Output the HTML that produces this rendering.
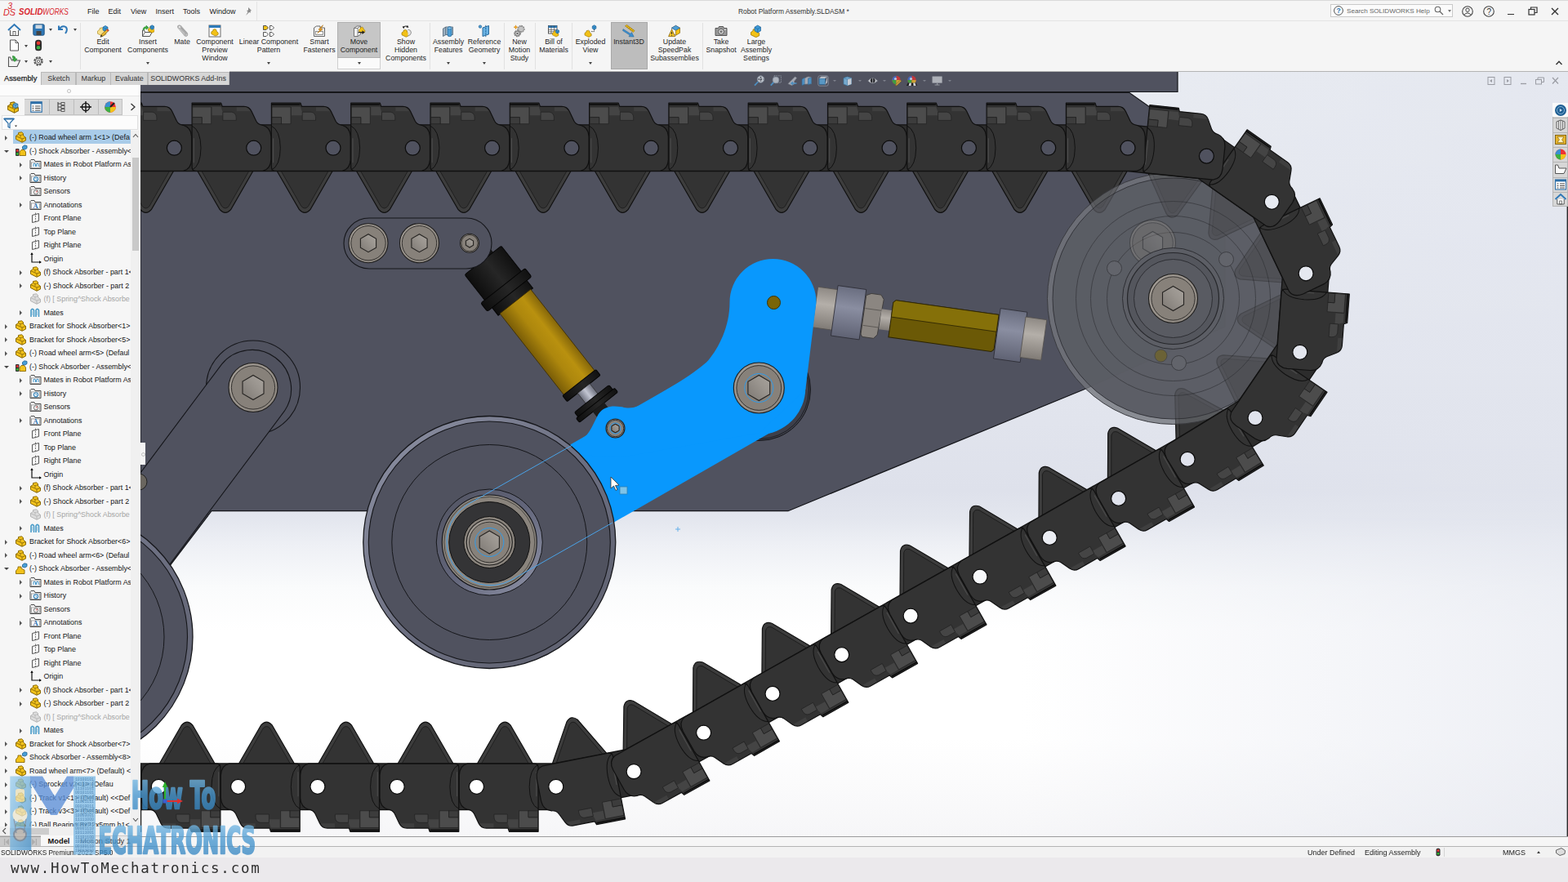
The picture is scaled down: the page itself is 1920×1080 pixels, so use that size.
<!DOCTYPE html><html><head><meta charset="utf-8"><title>Robot Platform Assembly.SLDASM</title><style>
html,body{margin:0;padding:0;width:1920px;height:1080px;overflow:hidden;background:#f4f4f4;}
body{font-family:"Liberation Sans",sans-serif;font-size:9px;color:#222;position:relative;}
#scene{position:absolute;left:0;top:0;}
.abs{position:absolute;}
#title{left:0;top:0;width:1920px;height:25px;background:#f5f5f5;border-top:1px solid #d9d9d9;box-sizing:border-box;}
#ribbon{left:0;top:25px;width:1920px;height:63px;background:#f5f5f5;border-top:1px solid #e3e3e3;box-sizing:border-box;}
.menu{top:7.5px;font-size:9px;color:#1a1a1a;}
.rb{top:45.5px;text-align:center;font-size:8.8px;line-height:10px;color:#1f1f1f;transform:translateX(-50%);white-space:nowrap;}
.ic{width:16px;height:16px;top:30px;transform:translateX(-50%);}
.sep{top:28px;width:1px;height:57px;background:#e1e1e1;}
.dd{width:0;height:0;border-left:2.5px solid transparent;border-right:2.5px solid transparent;border-top:3px solid #444;transform:translateX(-50%);}
.tab{top:87.5px;height:16.5px;box-sizing:border-box;font-size:8.9px;line-height:15.5px;text-align:center;background:#d6d6d6;border:1px solid #b9b9b9;border-bottom:none;color:#333;}
#left{left:0;top:104px;width:172px;height:934px;background:#f6f6f6;overflow:hidden;}
.tr{left:0;height:16.5px;line-height:16.5px;font-size:8.9px;white-space:nowrap;color:#151515;}
.tr.g{color:#a5a5a5;}
.ar{width:0;height:0;border-top:3px solid transparent;border-bottom:3px solid transparent;border-left:3.5px solid #555;}
.ad{width:0;height:0;border-left:3px solid transparent;border-right:3px solid transparent;border-top:3.5px solid #444;}
#status{left:0;top:1036px;width:1920px;height:14px;background:#f2f2f2;border-top:1px solid #b5b5b5;font-size:9px;line-height:14px;}
#bottom{left:0;top:1050px;width:1920px;height:30px;background:#ebe9ec;}
#url{left:13px;top:1053px;font-family:"DejaVu Sans Mono","Liberation Mono",monospace;font-size:17.5px;letter-spacing:1.72px;color:#2e2e2e;white-space:nowrap;}
</style></head><body><svg id="scene" width="1920" height="1080" viewBox="0 0 1920 1080"><defs>
<linearGradient id="gBg" x1="0" y1="0" x2="0" y2="1">
 <stop offset="0" stop-color="#e9ecf2"/><stop offset="0.27" stop-color="#e5e8f0"/><stop offset="0.45" stop-color="#e1e4ed"/><stop offset="0.54" stop-color="#dee1eb"/><stop offset="0.575" stop-color="#e3e6ee"/><stop offset="0.61" stop-color="#eef0f5"/><stop offset="0.665" stop-color="#fafbfc"/><stop offset="0.72" stop-color="#ffffff"/><stop offset="0.86" stop-color="#ffffff"/><stop offset="1" stop-color="#f5f5f7"/>
</linearGradient>
<linearGradient id="gBgH" x1="0" y1="0" x2="1" y2="0">
 <stop offset="0" stop-color="#e2e5ee" stop-opacity="0"/><stop offset="1" stop-color="#e2e5ee" stop-opacity="0.6"/>
</linearGradient>
<linearGradient id="gBoltO" x1="0" y1="0" x2="1" y2="1">
 <stop offset="0" stop-color="#a39d96"/><stop offset="1" stop-color="#8b857e"/>
</linearGradient>
<linearGradient id="gHex" x1="0" y1="1" x2="1" y2="0">
 <stop offset="0" stop-color="#7d7873"/><stop offset="0.6" stop-color="#9a958f"/><stop offset="1" stop-color="#a9a49e"/>
</linearGradient>
<linearGradient id="gRim" x1="0" y1="0" x2="1" y2="1">
 <stop offset="0" stop-color="#8f93a6"/><stop offset="0.5" stop-color="#6d7082"/><stop offset="1" stop-color="#5b5d6b"/>
</linearGradient>
<linearGradient id="gRim2" x1="0" y1="0" x2="1" y2="1">
 <stop offset="0" stop-color="#50525f"/><stop offset="0.5" stop-color="#62657a"/><stop offset="1" stop-color="#9296aa"/>
</linearGradient>
<linearGradient id="gBlk" x1="0" y1="0" x2="0" y2="1">
 <stop offset="0" stop-color="#111"/><stop offset="0.45" stop-color="#262626"/><stop offset="1" stop-color="#0e0e0e"/>
</linearGradient>
<linearGradient id="gGold" x1="0" y1="0" x2="0" y2="1">
 <stop offset="0" stop-color="#86670a"/><stop offset="0.3" stop-color="#b9910f"/><stop offset="0.6" stop-color="#ad870d"/><stop offset="1" stop-color="#7a5d07"/>
</linearGradient>
<linearGradient id="gRod" x1="0" y1="0" x2="0" y2="1">
 <stop offset="0" stop-color="#6f7280"/><stop offset="0.5" stop-color="#c2c5d2"/><stop offset="1" stop-color="#6f7280"/>
</linearGradient>
<linearGradient id="gSilv" x1="0" y1="0" x2="0" y2="1">
 <stop offset="0" stop-color="#8e8984"/><stop offset="0.4" stop-color="#b4afa9"/><stop offset="1" stop-color="#807b76"/>
</linearGradient>
<linearGradient id="gGB" x1="0" y1="0" x2="0" y2="1">
 <stop offset="0" stop-color="#6a6e80"/><stop offset="0.4" stop-color="#8a8ea1"/><stop offset="1" stop-color="#5f6273"/>
</linearGradient>
<g id="lkt"><path d="M-69.5 27 L-41.5 75.5 Q-34.8 83 -28.1 75.5 L-0.2 27 Z" fill="#3d3d3d" stroke="#111" stroke-width="1.2" stroke-linejoin="round"/><path d="M-64.5 27 L-39 71.5 Q-34.8 76 -30.6 71.5 L-5.2 27 Z" fill="#333" stroke="#1a1a1a" stroke-width="0.8" stroke-linejoin="round"/></g><g id="lkb"><path d="M-75.6 -55 L-40 -55 L-38.5 -50.8 L-12 -50.8 Q-5.5 -50.8 -2.7 -44.9 L3 -33 Q5.5 -28.5 11 -27.9 Q20.7 -25 21.2 -14 L21.2 14 Q20.7 26 11 28.1 L-70.6 28.1 Q-75.6 28.1 -75.6 23 Z" fill="#333333" stroke="#111" stroke-width="1.2" stroke-linejoin="round"/><path d="M-75 -50.2 L-52 -50.2 L-52 -29.5 L-63.5 -29.5 L-63.5 -37.5 L-75 -37.5 Z" fill="#4c4c4c" stroke="#1c1c1c" stroke-width="0.6"/><path d="M-75 -37.5 L-63.5 -37.5 L-63.5 -29.5 L-75 -29.5 Z" fill="#3c3c3c" stroke="#1c1c1c" stroke-width="0.6"/><path d="M-51 -50.2 L-40 -50.2 L-38 -44 L-38 -40 L-51 -40 Z" fill="#444" /><path d="M-37.8 -44 L-27 -44 Q-21.5 -43 -21.5 -37 L-21.5 -33.8 L-37.8 -33.8 Z" fill="#454545" stroke="#1c1c1c" stroke-width="0.6"/><path d="M-21 -50 L-10 -50 Q-6 -49 -4 -45 L-21 -45 Z" fill="#3f3f3f"/><path d="M-75.6 -53.2 L-40.5 -53.2" stroke="#0a0a0a" stroke-width="1.4" fill="none"/><path d="M-75.6 -27 Q-65 -22 -64.7 0 Q-65 22 -75.6 27" fill="none" stroke="#111" stroke-width="1"/><path d="M-73.4 -12 L-73.4 18" fill="none" stroke="#4a4a4a" stroke-width="1.2"/></g></defs><rect x="172" y="88" width="1748" height="950" fill="url(#gBg)"/><rect x="1250" y="88" width="670" height="950" fill="url(#gBgH)"/><rect x="1918.6" y="253" width="1.4" height="784" fill="#2a2a2a"/><rect x="172" y="88" width="1270" height="24.5" fill="#50525f"/><path d="M172 112.5 L1442 112.5 L1442 88" fill="none" stroke="#15161a" stroke-width="1.2"/><path d="M172 113.5 L1383 113.5 L1500 196 L1500 400 L1327 477 L965 625.7 L259 625.7 L172 740 Z" fill="#50525f" stroke="#15161a" stroke-width="1.2"/><circle cx="310" cy="474.5" r="57.5" fill="#50525f" stroke="#15161a" stroke-width="1.1"/><path d="M348.4 503.2 L119.9 808.7 A48 48 0 0 1 43.1 751.3 L271.6 445.8 A48 48 0 0 1 348.4 503.2 Z" fill="#50525f" stroke="#15161a" stroke-width="1.1"/><g transform="translate(310 474.5)"><circle r="30" fill="url(#gBoltO)" stroke="#1e1d1c" stroke-width="1.1"/><circle r="26.6" fill="#87817a" stroke="#2a2826" stroke-width="0.9"/><polygon points="13,7.5 0,15 -13,7.5 -13,-7.5 -0,-15 13,-7.5" fill="url(#gHex)" stroke="#262422" stroke-width="1.1"/></g><circle cx="170" cy="590" r="10" fill="#6a665f" stroke="#222" stroke-width="1"/><g transform="translate(575 298) rotate(51.8)"><rect x="4" y="-16" width="26" height="32" fill="#141414"/><rect x="26.5" y="-28.5" width="46" height="57" rx="2" fill="url(#gBlk)" stroke="#050505" stroke-width="1"/><rect x="66" y="-34.5" width="13" height="69" rx="2.5" fill="url(#gBlk)" stroke="#050505" stroke-width="1"/><rect x="79" y="-27" width="12" height="54" fill="url(#gBlk)" stroke="#050505" stroke-width="1"/><rect x="90.5" y="-24" width="127" height="48" fill="url(#gGold)" stroke="#3b2c02" stroke-width="0.8"/><rect x="217" y="-26" width="9" height="52" rx="1.5" fill="url(#gBlk)" stroke="#050505" stroke-width="1"/><rect x="226" y="-9.5" width="18" height="19" fill="url(#gRod)" stroke="#333" stroke-width="0.8"/><rect x="242" y="-27" width="7.5" height="54" rx="2" fill="url(#gBlk)" stroke="#050505" stroke-width="1"/><rect x="249" y="-30" width="6.5" height="60" rx="2" fill="url(#gBlk)" stroke="#050505" stroke-width="1"/><rect x="255" y="-9" width="18" height="18" fill="#1c1c1c"/></g><path d="M452 267 L571 267 A31 31 0 0 1 571 329 L452 329 A31 31 0 0 1 452 267 Z" fill="#50525f" stroke="#15161a" stroke-width="1.1"/><g transform="translate(451 297.7)"><circle r="24" fill="url(#gBoltO)" stroke="#1e1d1c" stroke-width="1.1"/><circle r="21.2" fill="#87817a" stroke="#2a2826" stroke-width="0.9"/><polygon points="9.6,5.5 0,11 -9.6,5.5 -9.6,-5.5 -0,-11 9.6,-5.5" fill="url(#gHex)" stroke="#262422" stroke-width="1.1"/></g><g transform="translate(513.5 297.7)"><circle r="24" fill="url(#gBoltO)" stroke="#1e1d1c" stroke-width="1.1"/><circle r="21.2" fill="#87817a" stroke="#2a2826" stroke-width="0.9"/><polygon points="9.6,5.5 0,11 -9.6,5.5 -9.6,-5.5 -0,-11 9.6,-5.5" fill="url(#gHex)" stroke="#262422" stroke-width="1.1"/></g><g transform="translate(575 297.7)"><circle r="11.5" fill="url(#gBoltO)" stroke="#1e1d1c" stroke-width="1.1"/><circle r="10.2" fill="#87817a" stroke="#2a2826" stroke-width="0.9"/><polygon points="4.6,2.6 0,5.3 -4.6,2.6 -4.6,-2.6 -0,-5.3 4.6,-2.6" fill="url(#gHex)" stroke="#262422" stroke-width="1.1"/></g><g transform="translate(81.5 780)"><circle r="154.5" fill="url(#gRim)" stroke="#15161a" stroke-width="1.3"/><circle r="148" fill="#50525f" stroke="#15161a" stroke-width="1.1"/><circle r="119.5" fill="none" stroke="#15161a" stroke-width="1"/></g><g transform="translate(998 377) rotate(8)"><rect x="0" y="-26" width="26" height="50" fill="url(#gSilv)" stroke="#55524e" stroke-width="0.8"/><rect x="24" y="-31" width="35" height="62" fill="url(#gGB)" stroke="#2a2b33" stroke-width="0.8"/><path d="M60 -24 L66 -27 L78 -27 L82 -22 L80 22 L76 27 L62 27 L60 24 Z" fill="#8b8681" stroke="#3a3835" stroke-width="0.8"/><path d="M61 -8 L81 -8 M61 13 L80 13" stroke="#55524e" stroke-width="0.8" fill="none"/><rect x="81" y="-10" width="14" height="25" fill="url(#gSilv)"/><path d="M94 -20 L97 -23 L224 -23 L224 20 L221 23 L94 23 Z" fill="#6b5906" stroke="#2c2402" stroke-width="1"/><path d="M97 -23 L224 -23 L224 -2 L94 -2 L94 -20 Z" fill="#857009" stroke="#2c2402" stroke-width="0.8"/><rect x="225" y="-31" width="33" height="62" fill="url(#gGB)" stroke="#2a2b33" stroke-width="0.8"/><rect x="257" y="-25" width="26" height="50" fill="url(#gSilv)" stroke="#55524e" stroke-width="0.8"/></g><circle cx="930" cy="477" r="62.5" fill="#3d3f4a" stroke="#15161a" stroke-width="1"/><circle cx="930" cy="477" r="60.5" fill="none" stroke="#15161a" stroke-width="0.8"/><path d="M572.2 616.7 L902.2 427.7 A54.5 54.5 0 0 1 956.4 522.3 L626.4 711.3 A54.5 54.5 0 0 1 572.2 616.7 Z" fill="#0998fd"/><circle cx="929.3" cy="475" r="57" fill="#0998fd"/><path d="M690 556 L698 545.5 C708 540 715 536 718.5 532.5 C724 526 728 516 732.5 507.5 C737 500 745 497.5 752.5 497.5 C760 497.5 765 499.5 770 499.5 C778 499.5 784 496 788.75 493.75 L830 468.75 C850 456 862 447 867.5 441 C880 426 893.5 400 893.5 370 A53 53 0 0 1 999.5 370 L986.3 477 L930 530 L760 560 Z" fill="#0998fd"/><circle cx="947.5" cy="370.5" r="8" fill="#7a6508" stroke="#3d3204" stroke-width="1"/><g transform="translate(929.3 475)"><circle r="31" fill="url(#gBoltO)" stroke="#1e1d1c" stroke-width="1.1"/><circle r="27.4" fill="#87817a" stroke="#2a2826" stroke-width="0.9"/><polygon points="13.4,7.7 0,15.5 -13.4,7.7 -13.4,-7.8 -0,-15.5 13.4,-7.8" fill="url(#gHex)" stroke="#262422" stroke-width="1.1"/><circle r="17.5" fill="none" stroke="#2f9bea" stroke-width="1"/></g><g transform="translate(753.5 524.5)"><circle r="11.5" fill="url(#gBoltO)" stroke="#1e1d1c" stroke-width="1.1"/><circle r="10.2" fill="#87817a" stroke="#2a2826" stroke-width="0.9"/><polygon points="4.6,2.6 0,5.3 -4.6,2.6 -4.6,-2.6 -0,-5.3 4.6,-2.6" fill="url(#gHex)" stroke="#262422" stroke-width="1.1"/><circle r="6.5" fill="none" stroke="#2f9bea" stroke-width="1"/></g><g transform="translate(599.3 664)"><circle r="154.5" fill="url(#gRim)" stroke="#15161a" stroke-width="1.3"/><circle r="148" fill="#50525f" stroke="#15161a" stroke-width="1.1"/><circle r="119.5" fill="none" stroke="#15161a" stroke-width="1"/><circle r="65" fill="url(#gRim2)" stroke="#15161a" stroke-width="1"/><circle r="58" fill="#8a847d" stroke="#15161a" stroke-width="1.1"/><circle r="55.5" fill="none" stroke="#3a3835" stroke-width="0.8"/><circle r="49.5" fill="#343436" stroke="#111" stroke-width="1"/><circle r="31.5" fill="#8a847d" stroke="#111" stroke-width="1"/></g><g transform="translate(599.3 664)"><circle r="28" fill="url(#gBoltO)" stroke="#1e1d1c" stroke-width="1.1"/><circle r="24.8" fill="#87817a" stroke="#2a2826" stroke-width="0.9"/><polygon points="12.1,7 0,14 -12.1,7 -12.1,-7 -0,-14 12.1,-7" fill="url(#gHex)" stroke="#262422" stroke-width="1.1"/><circle r="17.5" fill="none" stroke="#2f9bea" stroke-width="1"/></g><path d="M700 545.5 L572.7 617.6 A53.5 53.5 0 0 0 625.9 710.4 L750 640" fill="none" stroke="#4aa3e8" stroke-width="1"/><use href="#lkt" transform="translate(97 963.3) rotate(180)"/><use href="#lkt" transform="translate(194.3 963.3) rotate(180)"/><use href="#lkt" transform="translate(291.6 963.3) rotate(180)"/><use href="#lkt" transform="translate(388.9 963.3) rotate(180)"/><use href="#lkt" transform="translate(486.2 963.3) rotate(180)"/><use href="#lkt" transform="translate(583.5 963.3) rotate(180)"/><use href="#lkt" transform="translate(680.8 963.3) rotate(169)"/><use href="#lkt" transform="translate(776.1 944.7) rotate(150.9)"/><use href="#lkt" transform="translate(861.6 897.2) rotate(150.5)"/><use href="#lkt" transform="translate(946 849.4) rotate(150.6)"/><use href="#lkt" transform="translate(1030.7 801.6) rotate(150.6)"/><use href="#lkt" transform="translate(1115.1 754.1) rotate(150.6)"/><use href="#lkt" transform="translate(1200 706.2) rotate(150.7)"/><use href="#lkt" transform="translate(1285.2 658.4) rotate(150.4)"/><use href="#lkt" transform="translate(1369.6 610.4) rotate(150.4)"/><use href="#lkt" transform="translate(1454.1 562.4) rotate(148.6)"/><use href="#lkt" transform="translate(1537 511.7) rotate(124.3)"/><use href="#lkt" transform="translate(1591.8 431.3) rotate(94.3)"/><use href="#lkt" transform="translate(1599.1 334.8) rotate(64.5)"/><use href="#lkt" transform="translate(1557.3 247.3) rotate(35.1)"/><use href="#lkt" transform="translate(1477.4 191.1) rotate(5.9)"/><use href="#lkt" transform="translate(1381 181.2) rotate(0)"/><use href="#lkt" transform="translate(1283.7 181.2) rotate(0)"/><use href="#lkt" transform="translate(1186.4 181.2) rotate(0)"/><use href="#lkt" transform="translate(1089.1 181.2) rotate(0)"/><use href="#lkt" transform="translate(991.8 181.2) rotate(0)"/><use href="#lkt" transform="translate(894.5 181.2) rotate(0)"/><use href="#lkt" transform="translate(797.2 181.2) rotate(0)"/><use href="#lkt" transform="translate(699.9 181.2) rotate(0)"/><use href="#lkt" transform="translate(602.6 181.2) rotate(0)"/><use href="#lkt" transform="translate(505.3 181.2) rotate(0)"/><use href="#lkt" transform="translate(408 181.2) rotate(0)"/><use href="#lkt" transform="translate(310.7 181.2) rotate(0)"/><use href="#lkt" transform="translate(213.4 181.2) rotate(0)"/><g transform="translate(1436.5 365.5)"><circle r="154" fill="#73757c" fill-opacity="0.8" stroke="#3a3b40" stroke-width="1"/><circle r="147.5" fill="#5a5c63" fill-opacity="0.95" stroke="#33343a" stroke-width="1"/><circle r="119" fill="none" stroke="#3c3d43" stroke-width="0.9"/><circle r="101" fill="none" stroke="#3c3d43" stroke-width="0.9"/><circle r="81" fill="none" stroke="#3c3d43" stroke-width="0.9"/><g opacity="0.35"><g transform="translate(-25 -68)"><circle r="28" fill="url(#gBoltO)" stroke="#1e1d1c" stroke-width="1.1"/><circle r="24.8" fill="#87817a" stroke="#2a2826" stroke-width="0.9"/><polygon points="12.1,7 0,14 -12.1,7 -12.1,-7 -0,-14 12.1,-7" fill="url(#gHex)" stroke="#262422" stroke-width="1.1"/></g></g><circle r="62" fill="#5c5e65" stroke="#2d2e33" stroke-width="1"/><circle r="56" fill="#54565d" stroke="#26272b" stroke-width="1.2"/><circle r="48" fill="#595b62" stroke="#2d2e33" stroke-width="1"/><circle cx="-72" cy="-37" r="9" fill="#62646b" stroke="#3a3b40" stroke-width="0.9"/><circle cx="65" cy="-48" r="9" fill="#62646b" stroke="#3a3b40" stroke-width="0.9"/><circle cx="7" cy="79" r="9" fill="#62646b" stroke="#3a3b40" stroke-width="0.9"/><circle cx="-15" cy="70" r="7.5" fill="#6b6236" stroke="#444" stroke-width="0.8"/></g><g transform="translate(1436.5 365.5)"><circle r="30" fill="url(#gBoltO)" stroke="#1e1d1c" stroke-width="1.1"/><circle r="26.6" fill="#87817a" stroke="#2a2826" stroke-width="0.9"/><polygon points="13,7.5 0,15 -13,7.5 -13,-7.5 -0,-15 13,-7.5" fill="url(#gHex)" stroke="#262422" stroke-width="1.1"/></g><g opacity="0.28"><use href="#lkt" transform="translate(1285.2 658.4) rotate(150.4)"/><use href="#lkt" transform="translate(1369.6 610.4) rotate(150.4)"/><use href="#lkt" transform="translate(1454.1 562.4) rotate(148.6)"/><use href="#lkt" transform="translate(1537 511.7) rotate(124.3)"/><use href="#lkt" transform="translate(1591.8 431.3) rotate(94.3)"/><use href="#lkt" transform="translate(1599.1 334.8) rotate(64.5)"/><use href="#lkt" transform="translate(1557.3 247.3) rotate(35.1)"/><use href="#lkt" transform="translate(1477.4 191.1) rotate(5.9)"/><use href="#lkt" transform="translate(1381 181.2) rotate(0)"/><use href="#lkt" transform="translate(1283.7 181.2) rotate(0)"/><use href="#lkt" transform="translate(1186.4 181.2) rotate(0)"/></g><path d="M116.1 181.2 L213.4 181.2 L310.7 181.2 L408 181.2 L505.3 181.2 L602.6 181.2 L699.9 181.2 L797.2 181.2 L894.5 181.2 L991.8 181.2 L1089.1 181.2 L1186.4 181.2 L1283.7 181.2 L1381 181.2 L1477.4 191.1 L1557.3 247.3 L1599.1 334.8 L1591.8 431.3 L1537 511.7 L1454.1 562.4 L1369.6 610.4 L1285.2 658.4 L1200 706.2 L1115.1 754.1 L1030.7 801.6 L946 849.4 L861.6 897.2 L776.1 944.7 L680.8 963.3 L583.5 963.3 L486.2 963.3 L388.9 963.3 L291.6 963.3 L194.3 963.3 L97 963.3" fill="none" stroke="#111" stroke-width="58" stroke-linejoin="round"/><path d="M116.1 181.2 L213.4 181.2 L310.7 181.2 L408 181.2 L505.3 181.2 L602.6 181.2 L699.9 181.2 L797.2 181.2 L894.5 181.2 L991.8 181.2 L1089.1 181.2 L1186.4 181.2 L1283.7 181.2 L1381 181.2 L1477.4 191.1 L1557.3 247.3 L1599.1 334.8 L1591.8 431.3 L1537 511.7 L1454.1 562.4 L1369.6 610.4 L1285.2 658.4 L1200 706.2 L1115.1 754.1 L1030.7 801.6 L946 849.4 L861.6 897.2 L776.1 944.7 L680.8 963.3 L583.5 963.3 L486.2 963.3 L388.9 963.3 L291.6 963.3 L194.3 963.3 L97 963.3" fill="none" stroke="#2c2c2c" stroke-width="55.6" stroke-linejoin="round"/><use href="#lkb" transform="translate(97 963.3) rotate(180)"/><circle cx="97" cy="963.3" r="9" fill="#ffffff" stroke="#0c0c0c" stroke-width="1.2"/><use href="#lkb" transform="translate(194.3 963.3) rotate(180)"/><circle cx="194.3" cy="963.3" r="9" fill="#ffffff" stroke="#0c0c0c" stroke-width="1.2"/><use href="#lkb" transform="translate(291.6 963.3) rotate(180)"/><circle cx="291.6" cy="963.3" r="9" fill="#ffffff" stroke="#0c0c0c" stroke-width="1.2"/><use href="#lkb" transform="translate(388.9 963.3) rotate(180)"/><circle cx="388.9" cy="963.3" r="9" fill="#ffffff" stroke="#0c0c0c" stroke-width="1.2"/><use href="#lkb" transform="translate(486.2 963.3) rotate(180)"/><circle cx="486.2" cy="963.3" r="9" fill="#ffffff" stroke="#0c0c0c" stroke-width="1.2"/><use href="#lkb" transform="translate(583.5 963.3) rotate(180)"/><circle cx="583.5" cy="963.3" r="9" fill="#ffffff" stroke="#0c0c0c" stroke-width="1.2"/><use href="#lkb" transform="translate(680.8 963.3) rotate(169)"/><circle cx="680.8" cy="963.3" r="9" fill="#ffffff" stroke="#0c0c0c" stroke-width="1.2"/><use href="#lkb" transform="translate(776.1 944.7) rotate(150.9)"/><circle cx="776.1" cy="944.7" r="9" fill="#ffffff" stroke="#0c0c0c" stroke-width="1.2"/><use href="#lkb" transform="translate(861.6 897.2) rotate(150.5)"/><circle cx="861.6" cy="897.2" r="9" fill="#ffffff" stroke="#0c0c0c" stroke-width="1.2"/><use href="#lkb" transform="translate(946 849.4) rotate(150.6)"/><circle cx="946" cy="849.4" r="9" fill="#ffffff" stroke="#0c0c0c" stroke-width="1.2"/><use href="#lkb" transform="translate(1030.7 801.6) rotate(150.6)"/><circle cx="1030.7" cy="801.6" r="9" fill="#ffffff" stroke="#0c0c0c" stroke-width="1.2"/><use href="#lkb" transform="translate(1115.1 754.1) rotate(150.6)"/><circle cx="1115.1" cy="754.1" r="9" fill="#fdfefe" stroke="#0c0c0c" stroke-width="1.2"/><use href="#lkb" transform="translate(1200 706.2) rotate(150.7)"/><circle cx="1200" cy="706.2" r="9" fill="#f7f8fa" stroke="#0c0c0c" stroke-width="1.2"/><use href="#lkb" transform="translate(1285.2 658.4) rotate(150.4)"/><circle cx="1285.2" cy="658.4" r="9" fill="#ebedf3" stroke="#0c0c0c" stroke-width="1.2"/><use href="#lkb" transform="translate(1369.6 610.4) rotate(150.4)"/><circle cx="1369.6" cy="610.4" r="9" fill="#dfe2ec" stroke="#0c0c0c" stroke-width="1.2"/><use href="#lkb" transform="translate(1454.1 562.4) rotate(148.6)"/><circle cx="1454.1" cy="562.4" r="9" fill="#dfe2ec" stroke="#0c0c0c" stroke-width="1.2"/><use href="#lkb" transform="translate(1537 511.7) rotate(124.3)"/><circle cx="1537" cy="511.7" r="9" fill="#e1e4ed" stroke="#0c0c0c" stroke-width="1.2"/><use href="#lkb" transform="translate(1591.8 431.3) rotate(94.3)"/><circle cx="1591.8" cy="431.3" r="9" fill="#e3e6ee" stroke="#0c0c0c" stroke-width="1.2"/><use href="#lkb" transform="translate(1599.1 334.8) rotate(64.5)"/><circle cx="1599.1" cy="334.8" r="9" fill="#e5e8f0" stroke="#0c0c0c" stroke-width="1.2"/><use href="#lkb" transform="translate(1557.3 247.3) rotate(35.1)"/><circle cx="1557.3" cy="247.3" r="9" fill="#e7eaf1" stroke="#0c0c0c" stroke-width="1.2"/><use href="#lkb" transform="translate(1477.4 191.1) rotate(5.9)"/><circle cx="1477.4" cy="191.1" r="9" fill="#50525f" stroke="#0c0c0c" stroke-width="1.2"/><use href="#lkb" transform="translate(1381 181.2) rotate(0)"/><circle cx="1381" cy="181.2" r="9" fill="#50525f" stroke="#0c0c0c" stroke-width="1.2"/><use href="#lkb" transform="translate(1283.7 181.2) rotate(0)"/><circle cx="1283.7" cy="181.2" r="9" fill="#50525f" stroke="#0c0c0c" stroke-width="1.2"/><use href="#lkb" transform="translate(1186.4 181.2) rotate(0)"/><circle cx="1186.4" cy="181.2" r="9" fill="#50525f" stroke="#0c0c0c" stroke-width="1.2"/><use href="#lkb" transform="translate(1089.1 181.2) rotate(0)"/><circle cx="1089.1" cy="181.2" r="9" fill="#50525f" stroke="#0c0c0c" stroke-width="1.2"/><use href="#lkb" transform="translate(991.8 181.2) rotate(0)"/><circle cx="991.8" cy="181.2" r="9" fill="#50525f" stroke="#0c0c0c" stroke-width="1.2"/><use href="#lkb" transform="translate(894.5 181.2) rotate(0)"/><circle cx="894.5" cy="181.2" r="9" fill="#50525f" stroke="#0c0c0c" stroke-width="1.2"/><use href="#lkb" transform="translate(797.2 181.2) rotate(0)"/><circle cx="797.2" cy="181.2" r="9" fill="#50525f" stroke="#0c0c0c" stroke-width="1.2"/><use href="#lkb" transform="translate(699.9 181.2) rotate(0)"/><circle cx="699.9" cy="181.2" r="9" fill="#50525f" stroke="#0c0c0c" stroke-width="1.2"/><use href="#lkb" transform="translate(602.6 181.2) rotate(0)"/><circle cx="602.6" cy="181.2" r="9" fill="#50525f" stroke="#0c0c0c" stroke-width="1.2"/><use href="#lkb" transform="translate(505.3 181.2) rotate(0)"/><circle cx="505.3" cy="181.2" r="9" fill="#50525f" stroke="#0c0c0c" stroke-width="1.2"/><use href="#lkb" transform="translate(408 181.2) rotate(0)"/><circle cx="408" cy="181.2" r="9" fill="#50525f" stroke="#0c0c0c" stroke-width="1.2"/><use href="#lkb" transform="translate(310.7 181.2) rotate(0)"/><circle cx="310.7" cy="181.2" r="9" fill="#50525f" stroke="#0c0c0c" stroke-width="1.2"/><use href="#lkb" transform="translate(213.4 181.2) rotate(0)"/><circle cx="213.4" cy="181.2" r="9" fill="#50525f" stroke="#0c0c0c" stroke-width="1.2"/><path d="M748 584 L748 598 L751.5 595 L754 600.5 L756 599.5 L753.5 594.5 L758 594 Z" fill="#fff" stroke="#333" stroke-width="0.8"/><rect x="759" y="596" width="9" height="9" fill="#7fc4e8" stroke="#2a7fb5" stroke-width="0.8"/><path d="M827 648 L833 648 M830 645 L830 651" stroke="#4aa3e8" stroke-width="0.8"/></svg><div id="title" class="abs"><svg class="abs" style="left:3px;top:2px" width="90" height="20" viewBox="0 0 90 20"><text x="6.4" y="8.4" font-family="Liberation Sans,sans-serif" font-size="10" font-style="italic" fill="#d9272e">3</text><text x="1" y="16" font-family="Liberation Sans,sans-serif" font-size="10.5" font-style="italic" fill="#d9272e" textLength="15" lengthAdjust="spacingAndGlyphs">DS</text><text x="20" y="14.6" font-family="Liberation Sans,sans-serif" font-size="10.5" font-weight="bold" font-style="italic" fill="#d9272e" textLength="29.5" lengthAdjust="spacingAndGlyphs">SOLID</text><text x="49.3" y="14.6" font-family="Liberation Sans,sans-serif" font-size="10.5" font-style="italic" fill="#d9272e" textLength="31.5" lengthAdjust="spacingAndGlyphs">WORKS</text></svg><div class="abs menu" style="left:107px">File</div><div class="abs menu" style="left:132.5px">Edit</div><div class="abs menu" style="left:160px">View</div><div class="abs menu" style="left:190.5px">Insert</div><div class="abs menu" style="left:224px">Tools</div><div class="abs menu" style="left:256.5px">Window</div><svg class="abs" style="left:299px;top:7px" width="12" height="12" viewBox="0 0 12 12"><path d="M5 1 L9 5 L7.5 5.5 L8 7.5 L6 7 L2 11 L4.5 6.5 L3 5 L5 4.5 Z" fill="#8a8a8a"/></svg><div class="abs" style="left:314px;top:1px;width:1px;height:23px;background:#e4e4e4"></div><div class="abs" style="left:904px;top:8px;font-size:8.4px;color:#333;white-space:nowrap">Robot Platform Assembly.SLDASM *</div><div class="abs" style="left:1629px;top:4px;width:150px;height:16px;border:1px solid #c9c9c9;background:#fbfbfb;box-sizing:border-box"></div><svg class="abs" style="left:1632px;top:5px" width="14" height="14" viewBox="0 0 14 14"><circle cx="7" cy="7" r="5.4" fill="none" stroke="#555" stroke-width="1"/><text x="4.6" y="10" font-size="8.5" font-weight="bold" font-family="Liberation Sans,sans-serif" fill="#2d7ab8">?</text></svg><div class="abs" style="left:1649px;top:8px;font-size:8.1px;color:#666;white-space:nowrap">Search SOLIDWORKS Help</div><svg class="abs" style="left:1756px;top:6px" width="12" height="12" viewBox="0 0 12 12"><circle cx="4.5" cy="4.5" r="3.3" fill="none" stroke="#666" stroke-width="1.1"/><path d="M7 7 L11 11" stroke="#666" stroke-width="1.3"/></svg><div class="abs dd" style="left:1775px;top:11px;border-top-color:#777"></div><svg class="abs" style="left:1789px;top:5px" width="16" height="16" viewBox="0 0 16 16"><circle cx="8" cy="8" r="6.3" fill="none" stroke="#444" stroke-width="1.1"/><circle cx="8" cy="6.2" r="2.2" fill="none" stroke="#444" stroke-width="1"/><path d="M3.8 12.3 Q8 7.5 12.2 12.3" fill="none" stroke="#444" stroke-width="1"/></svg><svg class="abs" style="left:1815px;top:5px" width="16" height="16" viewBox="0 0 16 16"><circle cx="8" cy="8" r="6.3" fill="none" stroke="#444" stroke-width="1.1"/><text x="5.4" y="11.5" font-size="10" font-family="Liberation Sans,sans-serif" fill="#333">?</text></svg><div class="abs" style="left:1846px;top:16px;width:8px;height:1.4px;background:#333"></div><svg class="abs" style="left:1871px;top:7px" width="12" height="12" viewBox="0 0 12 12"><rect x="1" y="3.5" width="7" height="6.5" fill="none" stroke="#333" stroke-width="1.2"/><path d="M3.5 3.5 L3.5 1 L11 1 L11 7.5 L8 7.5" fill="none" stroke="#333" stroke-width="1.2"/></svg><svg class="abs" style="left:1899px;top:8px" width="10" height="10" viewBox="0 0 10 10"><path d="M1 1 L9 9 M9 1 L1 9" stroke="#333" stroke-width="1.4"/></svg></div><div id="ribbon" class="abs"></div><div class="abs" style="left:413px;top:27px;width:53px;height:43.5px;background:#c6c6c6;border:1px solid #b0b0b0;box-sizing:border-box"></div><div class="abs" style="left:413px;top:70.5px;width:53px;height:14.5px;background:#fafafa;border:1px solid #cfcfcf;border-top:none;box-sizing:border-box"></div><div class="abs" style="left:748px;top:27px;width:45px;height:58px;background:#bdbdbd;border:1px solid #a8a8a8;box-sizing:border-box"></div><div class="abs sep" style="left:98px"></div><div class="abs sep" style="left:526px"></div><div class="abs sep" style="left:617px"></div><div class="abs sep" style="left:655px"></div><div class="abs sep" style="left:700px"></div><div class="abs sep" style="left:859.5px"></div><svg class="abs ic" style="left:126px" viewBox="0 0 16 16"><path d="M1.5 8 l2.6 -1.8 l0 -1.6 l3 -0.8 l2 1.4 l0 2 l2.6 2 l0 3 l-4 2 l-6.2 -3 Z" fill="#f8e08a" stroke="#b89a3a" stroke-width="0.8" stroke-linejoin="round"/><path d="M8 3.3 l3.0 -1.7999999999999998 l3.0 1.7999999999999998 l0 3.5999999999999996 l-3.0 1.7999999999999998 l-3.0 -1.7999999999999998 Z" fill="#3d9bd8" stroke="#1c5f93" stroke-width="0.7" stroke-linejoin="round"/><path d="M8 3.3 l3.0 1.7999999999999998 l3.0 -1.7999999999999998 M11.0 5.1 l0 3.5999999999999996" fill="none" stroke="#1c5f93" stroke-width="0.6"/><path d="M13.5 5.5 l1.8 1.8 l-7.5 7 l-2.8 1 l1 -2.8 Z" fill="#f0c030" stroke="#6b4a10" stroke-width="0.7"/><path d="M13.5 5.5 l1.8 1.8 l-1.3 1.2 l-1.8 -1.8 Z" fill="#d9443a"/><path d="M5 15.3 l1 -2.8 l1.8 1.8 Z" fill="#333"/></svg><div class="abs rb" style="left:126px">Edit<br>Component</div><svg class="abs ic" style="left:181px" viewBox="0 0 16 16"><path d="M1.5 7 L1.5 14.5 L10.5 14.5 L13 9.5 L4.5 9.5 L3.5 7 Z" fill="#f4f4f4" stroke="#555" stroke-width="1"/><path d="M1.5 14.5 L4.5 9.5" stroke="#555" stroke-width="0.8"/><path d="M2 6.5 Q2.5 2.5 6 2.8 L6 1.2 L9 3.8 L6 6.2 L6 4.6 Q3.8 4.4 3.6 6.5 Z" fill="#3cae3c" stroke="#1f7a2a" stroke-width="0.5"/><g transform="translate(8.5 5.5) scale(0.75)"><path d="M0 0 l2.6 -1.8 l0 -1.6 l3 -0.8 l2 1.4 l0 2 l2.6 2 l0 3 l-4 2 l-6.2 -3 Z" fill="#f2c116" stroke="#9a7406" stroke-width="0.8" stroke-linejoin="round"/></g><path d="M11 2.15 l2.25 -1.3499999999999999 l2.25 1.3499999999999999 l0 2.6999999999999997 l-2.25 1.3499999999999999 l-2.25 -1.3499999999999999 Z" fill="#3d9bd8" stroke="#1c5f93" stroke-width="0.7" stroke-linejoin="round"/><path d="M11 2.15 l2.25 1.3499999999999999 l2.25 -1.3499999999999999 M13.25 3.5 l0 2.6999999999999997" fill="none" stroke="#1c5f93" stroke-width="0.6"/></svg><div class="abs rb" style="left:181px">Insert<br>Components</div><div class="abs dd" style="left:181px;top:76px"></div><svg class="abs ic" style="left:223px" viewBox="0 0 16 16"><path d="M3.2 3.6 L11.2 13.2 Q12.8 14.6 14 13.2 Q15 11.8 13.8 10.6 L6 1.8 Q4.6 0.6 3.4 1.8 Q2.4 3 3.6 4.2 L10.8 12 Q11.6 12.6 12.2 12 Q12.8 11.4 12.2 10.6 L6.2 4.2" fill="none" stroke="#8c8c8c" stroke-width="1.5" stroke-linecap="round"/><path d="M3.2 3.6 L11.2 13.2 Q12.8 14.6 14 13.2 Q15 11.8 13.8 10.6 L6 1.8 Q4.6 0.6 3.4 1.8 Q2.4 3 3.6 4.2 L10.8 12 Q11.6 12.6 12.2 12 Q12.8 11.4 12.2 10.6 L6.2 4.2" fill="none" stroke="#e6e6e6" stroke-width="0.5" stroke-linecap="round"/></svg><div class="abs rb" style="left:223px">Mate</div><svg class="abs ic" style="left:263px" viewBox="0 0 16 16"><rect x="1" y="1" width="14" height="14" fill="#fcfcfc" stroke="#6d6d6d" stroke-width="1"/><rect x="1" y="1" width="14" height="3" fill="#2d7ab8"/><g transform="translate(3.8 9) scale(0.82)"><path d="M0 0 l2.6 -1.8 l0 -1.6 l3 -0.8 l2 1.4 l0 2 l2.6 2 l0 3 l-4 2 l-6.2 -3 Z" fill="#f2c116" stroke="#9a7406" stroke-width="0.8" stroke-linejoin="round"/></g></svg><div class="abs rb" style="left:263px">Component<br>Preview<br>Window</div><svg class="abs ic" style="left:329px" viewBox="0 0 16 16"><path d="M1.5 1.5 L5 1.5 L7.5 4 L5 6.5 L1.5 6.5 Z" fill="#f2c116" stroke="#444" stroke-width="0.9"/><path d="M9.5 1.5 L12 1.5 L14.5 4 L12 6.5 L9.5 6.5 Z" fill="#fff" stroke="#444" stroke-width="0.9"/><path d="M1.5 9.5 L5 9.5 L7.5 12 L5 14.5 L1.5 14.5 Z" fill="#fff" stroke="#444" stroke-width="0.9"/><path d="M9.5 9.5 L12 9.5 L14.5 12 L12 14.5 L9.5 14.5 Z" fill="#fff" stroke="#444" stroke-width="0.9"/></svg><div class="abs rb" style="left:329px">Linear Component<br>Pattern</div><div class="abs dd" style="left:329px;top:76px"></div><svg class="abs ic" style="left:391px" viewBox="0 0 16 16"><path d="M1.5 4 L4.5 2 L9 2 L9 4 L14.5 4 L14.5 14.5 L1.5 14.5 Z" fill="#f4f4f4" stroke="#666" stroke-width="1"/><rect x="3.5" y="8.5" width="9" height="4" fill="#fff" stroke="#777" stroke-width="0.8"/><path d="M12.5 0.8 L7 6.2 L9.4 6.6 L5.6 10.6 L12 6 L9.6 5.4 Z" fill="#f5a81c" stroke="#a86508" stroke-width="0.6"/></svg><div class="abs rb" style="left:391px">Smart<br>Fasteners</div><svg class="abs ic" style="left:439.5px" viewBox="0 0 16 16"><path d="M1.5 4.5 L5 2 L9.5 2 L9.5 12 L6 14.5 L1.5 14.5 Z" fill="#f6f6f6" stroke="#666" stroke-width="0.9"/><path d="M1.5 4.5 L6 4.5 L9.5 2 M6 4.5 L6 14.5" fill="none" stroke="#666" stroke-width="0.8"/><g transform="translate(7.5 6.2) scale(0.72)"><path d="M0 0 l2.6 -1.8 l0 -1.6 l3 -0.8 l2 1.4 l0 2 l2.6 2 l0 3 l-4 2 l-6.2 -3 Z" fill="#f2c116" stroke="#9a7406" stroke-width="0.8" stroke-linejoin="round"/></g><path d="M6.5 9 L11.5 9 L11.5 7.2 L14.8 9.6 L11.5 12 L11.5 10.2 L6.5 10.2 Z" fill="#222"/></svg><div class="abs rb" style="left:439.5px">Move<br>Component</div><div class="abs dd" style="left:439.5px;top:76px"></div><svg class="abs ic" style="left:497px" viewBox="0 0 16 16"><g transform="translate(3 10) scale(0.85)"><path d="M0 0 l2.6 -1.8 l0 -1.6 l3 -0.8 l2 1.4 l0 2 l2.6 2 l0 3 l-4 2 l-6.2 -3 Z" fill="#f2c116" stroke="#9a7406" stroke-width="0.8" stroke-linejoin="round"/></g><path d="M10.5 6 Q14.5 6.5 14.5 10 Q14 13.5 10.5 13.8" fill="#e4e4e4" stroke="#8a8a8a" stroke-width="0.9"/><path d="M4.5 3.5 Q7.5 0.8 10.5 3" fill="none" stroke="#222" stroke-width="1.1"/><path d="M10 0.8 L11.4 3.8 L8.4 3.6 Z" fill="#222"/><path d="M5.4 5.2 L3.6 2.6 L6.6 2.4 Z" fill="#222"/></svg><div class="abs rb" style="left:497px">Show<br>Hidden<br>Components</div><svg class="abs ic" style="left:549px" viewBox="0 0 16 16"><path d="M1.5 5 L5 3 L5 12.5 L1.5 14.5 Z" fill="#9fb3c4" stroke="#4d6274" stroke-width="0.8"/><path d="M5 3 L13.5 3 L13.5 12.5 L5 12.5 Z" fill="#c9d6e0" stroke="#4d6274" stroke-width="0.8"/><path d="M7 4.5 Q7 2.8 9.5 2.8 Q12 2.8 12 4.5 L12 13 Q12 14.6 9.5 14.6 Q7 14.6 7 13 Z" fill="#4d9fd6" stroke="#1c5f93" stroke-width="0.8"/><ellipse cx="9.5" cy="4.5" rx="2.5" ry="1.4" fill="#8cc4ea" stroke="#1c5f93" stroke-width="0.6"/></svg><div class="abs rb" style="left:549px">Assembly<br>Features</div><div class="abs dd" style="left:549px;top:76px"></div><svg class="abs ic" style="left:593px" viewBox="0 0 16 16"><path d="M6 4 L13.5 1.5 L13.5 12 L6 14.5 Z" fill="#6bb3e4" stroke="#1c5f93" stroke-width="0.9"/><path d="M9.8 0.8 L9.8 15.2" stroke="#1c5f93" stroke-width="0.9" stroke-dasharray="2.2 1"/><circle cx="3" cy="2.6" r="1.7" fill="#4d9fd6" stroke="#1c5f93" stroke-width="0.7"/></svg><div class="abs rb" style="left:593px">Reference<br>Geometry</div><div class="abs dd" style="left:593px;top:76px"></div><svg class="abs ic" style="left:636px" viewBox="0 0 16 16"><circle cx="10" cy="5.5" r="4.2" fill="#d6d6d6" stroke="#777" stroke-width="1" stroke-dasharray="1.8 1"/><circle cx="10" cy="5.5" r="3.2" fill="#e2e2e2" stroke="#777" stroke-width="0.8"/><circle cx="10" cy="5.5" r="1.3" fill="#fff" stroke="#777" stroke-width="0.7"/><circle cx="5.5" cy="11" r="3.8" fill="#bdbdbd" stroke="#666" stroke-width="1" stroke-dasharray="1.8 1"/><circle cx="5.5" cy="11" r="2.8" fill="#cfcfcf" stroke="#666" stroke-width="0.8"/><circle cx="5.5" cy="11" r="1.1" fill="#555"/><path d="M3.5 0.8 L4.2 2.6 L6 3.2 L4.2 3.9 L3.5 5.8 L2.8 3.9 L1 3.2 L2.8 2.6 Z" fill="#f5a81c" stroke="#c77a08" stroke-width="0.4"/></svg><div class="abs rb" style="left:636px">New<br>Motion<br>Study</div><svg class="abs ic" style="left:678px" viewBox="0 0 16 16"><rect x="1.5" y="1.5" width="10.5" height="9.5" fill="#fff" stroke="#4a4a4a" stroke-width="0.9"/><rect x="1.5" y="1.5" width="10.5" height="2.6" fill="#2d7ab8"/><path d="M5 1.5 L5 11 M8.5 1.5 L8.5 11 M1.5 6.4 L12 6.4 M1.5 8.7 L12 8.7" stroke="#4a4a4a" stroke-width="0.7"/><g transform="translate(6.5 10.5) scale(0.72)"><path d="M0 0 l2.6 -1.8 l0 -1.6 l3 -0.8 l2 1.4 l0 2 l2.6 2 l0 3 l-4 2 l-6.2 -3 Z" fill="#f2c116" stroke="#9a7406" stroke-width="0.8" stroke-linejoin="round"/></g><path d="M10.5 7.4 l2.0 -1.2 l2.0 1.2 l0 2.4 l-2.0 1.2 l-2.0 -1.2 Z" fill="#3d9bd8" stroke="#1c5f93" stroke-width="0.7" stroke-linejoin="round"/><path d="M10.5 7.4 l2.0 1.2 l2.0 -1.2 M12.5 8.6 l0 2.4" fill="none" stroke="#1c5f93" stroke-width="0.6"/></svg><div class="abs rb" style="left:678px">Bill of<br>Materials</div><svg class="abs ic" style="left:723px" viewBox="0 0 16 16"><g transform="translate(1 10.5) scale(0.8)"><path d="M0 0 l2.6 -1.8 l0 -1.6 l3 -0.8 l2 1.4 l0 2 l2.6 2 l0 3 l-4 2 l-6.2 -3 Z" fill="#f2c116" stroke="#9a7406" stroke-width="0.8" stroke-linejoin="round"/></g><path d="M10.3 2.1799999999999997 l2.3 -1.38 l2.3 1.38 l0 2.76 l-2.3 1.38 l-2.3 -1.38 Z" fill="#3d9bd8" stroke="#1c5f93" stroke-width="0.7" stroke-linejoin="round"/><path d="M10.3 2.1799999999999997 l2.3 1.38 l2.3 -1.38 M12.600000000000001 3.5599999999999996 l0 2.76" fill="none" stroke="#1c5f93" stroke-width="0.6"/><path d="M12.6 6 L12.6 8.6 L9.2 8.6" fill="none" stroke="#333" stroke-width="0.9" stroke-dasharray="1.4 0.9"/></svg><div class="abs rb" style="left:723px">Exploded<br>View</div><div class="abs dd" style="left:723px;top:76px"></div><svg class="abs ic" style="left:770px" viewBox="0 0 16 16"><path d="M3.5 1.8 L5.6 0.6 L15 7.6 L13.4 9.4 Z" fill="#f2c116" stroke="#9a7406" stroke-width="0.7"/><path d="M6 3.6 L7 2.4 M8 5 L9 3.8 M10 6.4 L11 5.2 M12 7.8 L13 6.6" stroke="#6b5106" stroke-width="0.7"/><path d="M1 5.6 L10.2 11.4 L11.4 9.6 L14.2 15 L8 14.8 L9.2 13 L0.6 7.6 Z" fill="#3d8fd0" stroke="#1c5f93" stroke-width="0.5"/></svg><div class="abs rb" style="left:770px">Instant3D</div><svg class="abs ic" style="left:826px" viewBox="0 0 16 16"><path d="M4.5 4.2 l5.0 -3.0 l5.0 3.0 l0 6.0 l-5.0 3.0 l-5.0 -3.0 Z" fill="#f4f4f4" stroke="#666" stroke-width="0.7" stroke-linejoin="round"/><path d="M4.5 4.2 l5.0 3.0 l5.0 -3.0 M9.5 7.2 l0 6.0" fill="none" stroke="#666" stroke-width="0.6"/><path d="M9.5 7.2 L14.5 4.4 L14.5 10.2 L9.5 13.2 Z" fill="#f2c116" stroke="#9a7406" stroke-width="0.6"/><path d="M9.5 1.4 L14.4 4.2 L9.5 7 L4.6 4.2 Z" fill="#4d9fd6" stroke="#1c5f93" stroke-width="0.6"/><path d="M4.6 6 L8.6 14.6 L0.6 14.6 Z" fill="#f7c82a" stroke="#8a6408" stroke-width="0.8" stroke-linejoin="round"/><path d="M4.6 9 L4.6 12 M4.6 13 L4.6 13.8" stroke="#222" stroke-width="1"/></svg><div class="abs rb" style="left:826px">Update<br>SpeedPak<br>Subassemblies</div><svg class="abs ic" style="left:883px" viewBox="0 0 16 16"><path d="M1 4.5 L4.5 4.5 L5.5 2.5 L10.5 2.5 L11.5 4.5 L15 4.5 L15 13.5 L1 13.5 Z" fill="#9a9a9a" stroke="#4a4a4a" stroke-width="0.9"/><circle cx="8" cy="8.8" r="3.4" fill="#e8e8e8" stroke="#4a4a4a" stroke-width="0.9"/><circle cx="8" cy="8.8" r="1.7" fill="#777"/><rect x="12" y="5.6" width="1.8" height="1.2" fill="#e8e8e8"/></svg><div class="abs rb" style="left:883px">Take<br>Snapshot</div><svg class="abs ic" style="left:926px" viewBox="0 0 16 16"><path d="M1.5 9.5 l2.6 -1.8 l0 -1.6 l3 -0.8 l2 1.4 l0 2 l2.6 2 l0 3 l-4 2 l-6.2 -3 Z" fill="#f2c116" stroke="#9a7406" stroke-width="0.8" stroke-linejoin="round"/><path d="M6 3.25 l3.75 -2.25 l3.75 2.25 l0 4.5 l-3.75 2.25 l-3.75 -2.25 Z" fill="#3d9bd8" stroke="#1c5f93" stroke-width="0.7" stroke-linejoin="round"/><path d="M6 3.25 l3.75 2.25 l3.75 -2.25 M9.75 5.5 l0 4.5" fill="none" stroke="#1c5f93" stroke-width="0.6"/></svg><div class="abs rb" style="left:926px">Large<br>Assembly<br>Settings</div><svg class="abs" style="left:8px;top:28px" width="20" height="18" viewBox="0 0 20 18"><path d="M2 9 L9.5 2 L17 9" fill="none" stroke="#2f78b7" stroke-width="2"/><path d="M4.5 9 L4.5 15.5 L14.5 15.5 L14.5 9" fill="#fff" stroke="#555" stroke-width="1.1"/><rect x="8" y="10.5" width="3" height="5" fill="none" stroke="#555" stroke-width="0.9"/></svg><svg class="abs" style="left:40px;top:29px" width="15" height="15" viewBox="0 0 15 15"><rect x="0.8" y="0.8" width="13.4" height="13.4" rx="1.5" fill="#2f78b7" stroke="#1d4f7d" stroke-width="0.9"/><rect x="3.5" y="1.5" width="8" height="4.5" fill="#cfd9e2"/><rect x="4.5" y="9" width="6" height="5" fill="#444"/></svg><div class="abs dd" style="left:62px;top:35px"></div><svg class="abs" style="left:70px;top:30px" width="15" height="13" viewBox="0 0 15 13"><path d="M2 1.5 L2 6 L7 6 M2.5 5.5 Q6 0.5 10.5 3 Q13.5 6 10 11" fill="none" stroke="#2f78b7" stroke-width="2"/></svg><div class="abs dd" style="left:92px;top:35px"></div><svg class="abs" style="left:11px;top:48px" width="13" height="15" viewBox="0 0 13 15"><path d="M1.5 1 L8 1 L11.5 4.5 L11.5 14 L1.5 14 Z" fill="#fdfdfd" stroke="#555" stroke-width="1"/><path d="M8 1 L8 4.5 L11.5 4.5" fill="none" stroke="#555" stroke-width="0.9"/></svg><div class="abs dd" style="left:32px;top:54.5px"></div><svg class="abs" style="left:42px;top:48px" width="10" height="15" viewBox="0 0 10 15"><rect x="1" y="0.8" width="8" height="13.4" rx="3.5" fill="#2c2c2c"/><circle cx="5" cy="4.8" r="2.3" fill="#e8382e"/><circle cx="5" cy="10.3" r="2.3" fill="#3cb043"/></svg><svg class="abs" style="left:9px;top:67px" width="17" height="16" viewBox="0 0 17 16"><path d="M1.5 3 L1.5 14.5 L12 14.5 L15.5 7 L5.5 7 L3.5 3 Z" fill="#f3f3f3" stroke="#555" stroke-width="1.1"/><path d="M6.5 1.5 Q10 1.5 10 5 L12 5 L9 8.5 L6 5 L8 5 Q8 3.5 6.5 3.5 Z" fill="#3cb043" stroke="#1f7a2a" stroke-width="0.6"/></svg><div class="abs dd" style="left:32px;top:74px"></div><svg class="abs" style="left:40px;top:68px" width="14" height="14" viewBox="0 0 14 14"><circle cx="7" cy="7" r="4.6" fill="none" stroke="#555" stroke-width="2.2" stroke-dasharray="2.4 1.2"/><circle cx="7" cy="7" r="3.6" fill="#f5f5f5" stroke="#555" stroke-width="0.9"/><circle cx="7" cy="7" r="1.6" fill="none" stroke="#555" stroke-width="0.9"/></svg><div class="abs dd" style="left:62px;top:74px"></div><svg class="abs" style="left:1904px;top:73px" width="10" height="8" viewBox="0 0 10 8"><path d="M1.5 6 L5 2.2 L8.5 6" fill="none" stroke="#333" stroke-width="1.4"/></svg><div class="abs" style="left:281px;top:87px;width:1639px;height:1px;background:#b4b4b4"></div><div class="abs" style="left:0;top:87px;width:50.3px;height:17px;background:#f6f6f6;font-size:9.3px;line-height:18.2px;text-align:center;color:#222;-webkit-text-stroke:0.25px #222">Assembly</div><div class="abs tab" style="left:50.3px;width:43.2px">Sketch</div><div class="abs tab" style="left:92.5px;width:43.8px">Markup</div><div class="abs tab" style="left:135.3px;width:46.2px">Evaluate</div><div class="abs tab" style="left:180.5px;width:100.2px">SOLIDWORKS Add-Ins</div><div id="left" class="abs"><div class="abs" style="left:0;top:0;width:172px;height:13px;background:#fcfcfc;border-bottom:1px solid #e6e6e6"></div><div class="abs" style="left:82px;top:5px;width:3px;height:3px;border:1px solid #bdbdbd;border-radius:50%"></div><div class="abs" style="left:0;top:17px;width:150px;height:20px;background:#d9d9d9;border:1px solid #c2c2c2;box-sizing:border-box"></div><div class="abs" style="left:0;top:16px;width:30px;height:22px;background:#f6f6f6"></div><div class="abs" style="left:59.5px;top:18px;width:1px;height:18px;background:#bdbdbd"></div><div class="abs" style="left:89.5px;top:18px;width:1px;height:18px;background:#bdbdbd"></div><div class="abs" style="left:119.5px;top:18px;width:1px;height:18px;background:#bdbdbd"></div><svg class="abs" style="left:8px;top:20px" width="16" height="15" viewBox="0 0 15 14"><path d="M1.5 5.5 L4.5 3.5 L4.5 1.5 L8.5 0.8 L10.5 2.5 L10.5 5 L13.5 7.5 L13.5 11 L9 13.3 L1.5 9.5 Z" fill="#f2c21a" stroke="#8a6a08" stroke-width="1"/><path d="M1.5 5.5 L9 9 L13.5 7.5 M9 9 L9 13" fill="none" stroke="#8a6a08" stroke-width="0.9"/><path d="M4.5 3.5 L7 4.8 L10.5 3.5 M7 4.8 L7 7.5" fill="none" stroke="#8a6a08" stroke-width="0.8"/><path d="M7.5 3.2 L10.2 2 L13 3.2 L13 6.6 L10.2 8 L7.5 6.6 Z" fill="#6bb6e6" stroke="#1d5f8f" stroke-width="0.7"/><path d="M7.5 3.2 L10.2 4.4 L13 3.2 M10.2 4.4 L10.2 8" fill="none" stroke="#1d5f8f" stroke-width="0.6"/></svg><svg class="abs" style="left:37px;top:20px" width="15" height="14" viewBox="0 0 15 14"><rect x="0.8" y="0.8" width="13.4" height="12.4" fill="#fff" stroke="#2d6fa8" stroke-width="1.2"/><rect x="0.8" y="0.8" width="13.4" height="2.5" fill="#2d6fa8"/><path d="M2.5 6 L4.5 6 M6 6 L12.5 6 M2.5 8.5 L4.5 8.5 M6 8.5 L12.5 8.5 M2.5 11 L4.5 11 M6 11 L12.5 11" stroke="#444" stroke-width="1.1"/></svg><svg class="abs" style="left:68px;top:20px" width="14" height="14" viewBox="0 0 14 14"><path d="M3 1 L3 12 M3 3 L7 3 M3 7 L7 7 M3 11 L7 11" stroke="#444" stroke-width="1.1" fill="none"/><rect x="7" y="1.5" width="4" height="3" fill="#ddd" stroke="#444" stroke-width="0.8"/><rect x="7" y="5.5" width="4" height="3" fill="#ddd" stroke="#444" stroke-width="0.8"/><rect x="7" y="9.5" width="4" height="3" fill="#ddd" stroke="#444" stroke-width="0.8"/></svg><svg class="abs" style="left:97px;top:19px" width="16" height="16" viewBox="0 0 16 16"><circle cx="8" cy="8" r="4.6" fill="none" stroke="#111" stroke-width="1.4"/><path d="M8 1 L8 15 M1 8 L15 8" stroke="#111" stroke-width="1.4"/></svg><svg class="abs" style="left:127px;top:19px" width="16" height="16" viewBox="0 0 16 16"><circle cx="8" cy="8" r="6.8" fill="#e33"/><path d="M8 8 L8 1.2 A6.8 6.8 0 0 0 1.2 8 Z" fill="#3b8fd0"/><path d="M8 8 L1.2 8 A6.8 6.8 0 0 0 8 14.8 Z" fill="#3cb043"/><path d="M8 8 L8 14.8 A6.8 6.8 0 0 0 14.8 8 Z" fill="#f2c21a"/><path d="M8 8 L13 3" stroke="#222" stroke-width="2.2"/></svg><svg class="abs" style="left:159px;top:22px" width="8" height="10" viewBox="0 0 8 10"><path d="M1.5 1 L6 5 L1.5 9" fill="none" stroke="#333" stroke-width="1.3"/></svg><div class="abs" style="left:2px;top:36.5px;width:167px;height:18.5px;background:#fcfcfc;border:1px solid #e1e1e1;box-sizing:border-box"></div><svg class="abs" style="left:4px;top:40px" width="18" height="14" viewBox="0 0 18 14"><path d="M1 1.5 L13 1.5 L8 7 L8 12.5 L6 11.5 L6 7 Z" fill="#fff" stroke="#2d6fa8" stroke-width="1.2"/><path d="M1 1.5 L13 1.5" stroke="#2d6fa8" stroke-width="2"/><path d="M14 9.5 L17 9.5 L15.5 11.5 Z" fill="#333"/></svg><div class="abs" style="left:16px;top:55.249999999999986px;width:144px;height:16.5px;background:#a9cce9;"></div><div class="abs ar" style="left:6.0px;top:61.499999999999986px"></div><svg class="abs" style="left:18.0px;top:57.44999999999999px" width="15" height="14" viewBox="0 0 15 14"><path d="M1.5 5.5 L4.5 3.5 L4.5 1.5 L8.5 0.8 L10.5 2.5 L10.5 5 L13.5 7.5 L13.5 11 L9 13.3 L1.5 9.5 Z" fill="#f2c21a" stroke="#8a6a08" stroke-width="1"/><path d="M1.5 5.5 L9 9 L13.5 7.5 M9 9 L9 13" fill="none" stroke="#8a6a08" stroke-width="0.9"/><path d="M4.5 3.5 L7 4.8 L10.5 3.5 M7 4.8 L7 7.5" fill="none" stroke="#8a6a08" stroke-width="0.8"/></svg><div class="abs tr" style="left:36.0px;top:56.44999999999999px">(-) Road wheel arm 1&lt;1&gt; (Defa</div><div class="abs ad" style="left:4.5px;top:79.69999999999999px"></div><svg class="abs" style="left:18.0px;top:73.44999999999999px" width="16" height="15" viewBox="0 0 16 15"><rect x="1" y="5" width="4.5" height="9" rx="1" fill="#333"/><circle cx="3.2" cy="7.5" r="1.4" fill="#e33"/><circle cx="3.2" cy="11.5" r="1.4" fill="#3b3"/><path d="M6 9 L8 6.5 L11.5 6.5 L13.5 9 L13.5 13.5 L6 13.5 Z" fill="#f2c21a" stroke="#8a6a08" stroke-width="0.9"/><path d="M9.5 2.5 L12 0.8 L15 1.5 L15 4.5 L12.5 6 L9.5 5.2 Z" fill="#4aa0d8" stroke="#1d5f8f" stroke-width="0.8"/></svg><div class="abs tr" style="left:36.0px;top:72.94999999999999px">(-) Shock Absorber - Assembly&lt;</div><div class="abs ar" style="left:23.5px;top:94.49999999999999px"></div><svg class="abs" style="left:35.5px;top:90.44999999999999px" width="15" height="14" viewBox="0 0 15 14"><path d="M1 2.5 L1 12.5 L14 12.5 L14 3.5 L7 3.5 L6 1.5 L2 1.5 Z" fill="#f4f4f4" stroke="#4a4a4a" stroke-width="1"/><rect x="2.5" y="5" width="10" height="6.5" fill="#fff" stroke="#777" stroke-width="0.6"/><path d="M5 10 L5 6.8 Q6.2 5.5 7.4 6.8 L7.4 10 M8.6 10 L8.6 6.8 Q9.8 5.5 11 6.8 L11 10" fill="none" stroke="#3a8fc4" stroke-width="1"/></svg><div class="abs tr" style="left:53.5px;top:89.44999999999999px">Mates in Robot Platform As</div><div class="abs ar" style="left:23.5px;top:110.99999999999999px"></div><svg class="abs" style="left:35.5px;top:106.94999999999999px" width="15" height="14" viewBox="0 0 15 14"><path d="M1 2.5 L1 12.5 L14 12.5 L14 3.5 L7 3.5 L6 1.5 L2 1.5 Z" fill="#f4f4f4" stroke="#4a4a4a" stroke-width="1"/><rect x="2.5" y="5" width="10" height="6.5" fill="#fff" stroke="#777" stroke-width="0.6"/><circle cx="8" cy="8.3" r="2.6" fill="none" stroke="#2d7fb8" stroke-width="1.1"/><path d="M8 6.8 L8 8.4 L9.3 9" stroke="#2d7fb8" stroke-width="0.8" fill="none"/></svg><div class="abs tr" style="left:53.5px;top:105.94999999999999px">History</div><svg class="abs" style="left:35.5px;top:123.44999999999999px" width="15" height="14" viewBox="0 0 15 14"><path d="M1 2.5 L1 12.5 L14 12.5 L14 3.5 L7 3.5 L6 1.5 L2 1.5 Z" fill="#f4f4f4" stroke="#4a4a4a" stroke-width="1"/><rect x="2.5" y="5" width="10" height="6.5" fill="#fff" stroke="#777" stroke-width="0.6"/><circle cx="8" cy="8.3" r="2.7" fill="#eee" stroke="#666" stroke-width="0.9"/><path d="M8 8.3 L9.8 6.8" stroke="#d33" stroke-width="1"/></svg><div class="abs tr" style="left:53.5px;top:122.44999999999999px">Sensors</div><div class="abs ar" style="left:23.5px;top:144.0px"></div><svg class="abs" style="left:35.5px;top:139.95px" width="15" height="14" viewBox="0 0 15 14"><path d="M1 2.5 L1 12.5 L14 12.5 L14 3.5 L7 3.5 L6 1.5 L2 1.5 Z" fill="#f4f4f4" stroke="#4a4a4a" stroke-width="1"/><rect x="2.5" y="5" width="10" height="6.5" fill="#fff" stroke="#777" stroke-width="0.6"/><text x="4.6" y="11.3" font-family="Liberation Serif,serif" font-size="8.5" font-weight="bold" fill="#2d6fb0">A</text></svg><div class="abs tr" style="left:53.5px;top:138.95px">Annotations</div><svg class="abs" style="left:36.5px;top:156.45px" width="14" height="14" viewBox="0 0 14 14"><path d="M2.5 3.5 L10.5 1.5 L10.5 10.5 L2.5 12.5 Z" fill="#fafafa" stroke="#555" stroke-width="1"/><path d="M6.5 0.5 L6.5 13.5" stroke="#555" stroke-width="0.8" stroke-dasharray="2 1.2"/></svg><div class="abs tr" style="left:53.5px;top:155.45px">Front Plane</div><svg class="abs" style="left:36.5px;top:172.95px" width="14" height="14" viewBox="0 0 14 14"><path d="M2.5 3.5 L10.5 1.5 L10.5 10.5 L2.5 12.5 Z" fill="#fafafa" stroke="#555" stroke-width="1"/><path d="M6.5 0.5 L6.5 13.5" stroke="#555" stroke-width="0.8" stroke-dasharray="2 1.2"/></svg><div class="abs tr" style="left:53.5px;top:171.95px">Top Plane</div><svg class="abs" style="left:36.5px;top:189.45px" width="14" height="14" viewBox="0 0 14 14"><path d="M2.5 3.5 L10.5 1.5 L10.5 10.5 L2.5 12.5 Z" fill="#fafafa" stroke="#555" stroke-width="1"/><path d="M6.5 0.5 L6.5 13.5" stroke="#555" stroke-width="0.8" stroke-dasharray="2 1.2"/></svg><div class="abs tr" style="left:53.5px;top:188.45px">Right Plane</div><svg class="abs" style="left:35.5px;top:205.45px" width="15" height="15" viewBox="0 0 15 15"><path d="M3 1 L3 12 L14 12" fill="none" stroke="#111" stroke-width="1.2"/><path d="M3 0 L1.3 3 L4.7 3 Z M15 12 L12 10.3 L12 13.7 Z" fill="#111"/></svg><div class="abs tr" style="left:53.5px;top:204.95px">Origin</div><div class="abs ar" style="left:23.5px;top:226.5px"></div><svg class="abs" style="left:35.5px;top:222.45px" width="15" height="14" viewBox="0 0 15 14"><path d="M1.5 5.5 L4.5 3.5 L4.5 1.5 L8.5 0.8 L10.5 2.5 L10.5 5 L13.5 7.5 L13.5 11 L9 13.3 L1.5 9.5 Z" fill="#f2c21a" stroke="#8a6a08" stroke-width="1"/><path d="M1.5 5.5 L9 9 L13.5 7.5 M9 9 L9 13" fill="none" stroke="#8a6a08" stroke-width="0.9"/><path d="M4.5 3.5 L7 4.8 L10.5 3.5 M7 4.8 L7 7.5" fill="none" stroke="#8a6a08" stroke-width="0.8"/></svg><div class="abs tr" style="left:53.5px;top:221.45px">(f) Shock Absorber - part 1&lt;</div><div class="abs ar" style="left:23.5px;top:243.0px"></div><svg class="abs" style="left:35.5px;top:238.95px" width="15" height="14" viewBox="0 0 15 14"><path d="M1.5 5.5 L4.5 3.5 L4.5 1.5 L8.5 0.8 L10.5 2.5 L10.5 5 L13.5 7.5 L13.5 11 L9 13.3 L1.5 9.5 Z" fill="#f2c21a" stroke="#8a6a08" stroke-width="1"/><path d="M1.5 5.5 L9 9 L13.5 7.5 M9 9 L9 13" fill="none" stroke="#8a6a08" stroke-width="0.9"/><path d="M4.5 3.5 L7 4.8 L10.5 3.5 M7 4.8 L7 7.5" fill="none" stroke="#8a6a08" stroke-width="0.8"/></svg><div class="abs tr" style="left:53.5px;top:237.95px">(-) Shock Absorber - part 2</div><svg class="abs" style="left:35.5px;top:255.45px" width="15" height="14" viewBox="0 0 15 14"><path d="M1.5 5.5 L4.5 3.5 L4.5 1.5 L8.5 0.8 L10.5 2.5 L10.5 5 L13.5 7.5 L13.5 11 L9 13.3 L1.5 9.5 Z" fill="#dcdcdc" stroke="#b5b5b5" stroke-width="1"/><path d="M1.5 5.5 L9 9 L13.5 7.5 M9 9 L9 13" fill="none" stroke="#b5b5b5" stroke-width="0.9"/><path d="M4.5 3.5 L7 4.8 L10.5 3.5 M7 4.8 L7 7.5" fill="none" stroke="#b5b5b5" stroke-width="0.8"/></svg><div class="abs tr g" style="left:53.5px;top:254.45px">(f) [ Spring^Shock Absorbe</div><div class="abs ar" style="left:23.5px;top:276.0px"></div><svg class="abs" style="left:36.0px;top:271.95px" width="14" height="14" viewBox="0 0 14 14"><path d="M2 12 L2 4 Q3.7 0.8 5.5 4 L5.5 12 M8 12 L8 4 Q9.7 0.8 11.5 4 L11.5 12" fill="none" stroke="#4a9cc9" stroke-width="1.6"/><path d="M3.7 10 L3.7 4.8 M9.7 10 L9.7 4.8" stroke="#9dc8e0" stroke-width="1"/></svg><div class="abs tr" style="left:53.5px;top:270.95px">Mates</div><div class="abs ar" style="left:6.0px;top:292.5px"></div><svg class="abs" style="left:18.0px;top:288.45px" width="15" height="14" viewBox="0 0 15 14"><path d="M1.5 5.5 L4.5 3.5 L4.5 1.5 L8.5 0.8 L10.5 2.5 L10.5 5 L13.5 7.5 L13.5 11 L9 13.3 L1.5 9.5 Z" fill="#f2c21a" stroke="#8a6a08" stroke-width="1"/><path d="M1.5 5.5 L9 9 L13.5 7.5 M9 9 L9 13" fill="none" stroke="#8a6a08" stroke-width="0.9"/><path d="M4.5 3.5 L7 4.8 L10.5 3.5 M7 4.8 L7 7.5" fill="none" stroke="#8a6a08" stroke-width="0.8"/></svg><div class="abs tr" style="left:36.0px;top:287.45px">Bracket for Shock Absorber&lt;1&gt;</div><div class="abs ar" style="left:6.0px;top:309.0px"></div><svg class="abs" style="left:18.0px;top:304.95px" width="15" height="14" viewBox="0 0 15 14"><path d="M1.5 5.5 L4.5 3.5 L4.5 1.5 L8.5 0.8 L10.5 2.5 L10.5 5 L13.5 7.5 L13.5 11 L9 13.3 L1.5 9.5 Z" fill="#f2c21a" stroke="#8a6a08" stroke-width="1"/><path d="M1.5 5.5 L9 9 L13.5 7.5 M9 9 L9 13" fill="none" stroke="#8a6a08" stroke-width="0.9"/><path d="M4.5 3.5 L7 4.8 L10.5 3.5 M7 4.8 L7 7.5" fill="none" stroke="#8a6a08" stroke-width="0.8"/></svg><div class="abs tr" style="left:36.0px;top:303.95px">Bracket for Shock Absorber&lt;5&gt;</div><div class="abs ar" style="left:6.0px;top:325.5px"></div><svg class="abs" style="left:18.0px;top:321.45px" width="15" height="14" viewBox="0 0 15 14"><path d="M1.5 5.5 L4.5 3.5 L4.5 1.5 L8.5 0.8 L10.5 2.5 L10.5 5 L13.5 7.5 L13.5 11 L9 13.3 L1.5 9.5 Z" fill="#f2c21a" stroke="#8a6a08" stroke-width="1"/><path d="M1.5 5.5 L9 9 L13.5 7.5 M9 9 L9 13" fill="none" stroke="#8a6a08" stroke-width="0.9"/><path d="M4.5 3.5 L7 4.8 L10.5 3.5 M7 4.8 L7 7.5" fill="none" stroke="#8a6a08" stroke-width="0.8"/></svg><div class="abs tr" style="left:36.0px;top:320.45px">(-) Road wheel arm&lt;5&gt; (Defaul</div><div class="abs ad" style="left:4.5px;top:343.7px"></div><svg class="abs" style="left:18.0px;top:337.45px" width="16" height="15" viewBox="0 0 16 15"><rect x="1" y="5" width="4.5" height="9" rx="1" fill="#333"/><circle cx="3.2" cy="7.5" r="1.4" fill="#e33"/><circle cx="3.2" cy="11.5" r="1.4" fill="#3b3"/><path d="M6 9 L8 6.5 L11.5 6.5 L13.5 9 L13.5 13.5 L6 13.5 Z" fill="#f2c21a" stroke="#8a6a08" stroke-width="0.9"/><path d="M9.5 2.5 L12 0.8 L15 1.5 L15 4.5 L12.5 6 L9.5 5.2 Z" fill="#4aa0d8" stroke="#1d5f8f" stroke-width="0.8"/></svg><div class="abs tr" style="left:36.0px;top:336.95px">(-) Shock Absorber - Assembly&lt;</div><div class="abs ar" style="left:23.5px;top:358.5px"></div><svg class="abs" style="left:35.5px;top:354.45px" width="15" height="14" viewBox="0 0 15 14"><path d="M1 2.5 L1 12.5 L14 12.5 L14 3.5 L7 3.5 L6 1.5 L2 1.5 Z" fill="#f4f4f4" stroke="#4a4a4a" stroke-width="1"/><rect x="2.5" y="5" width="10" height="6.5" fill="#fff" stroke="#777" stroke-width="0.6"/><path d="M5 10 L5 6.8 Q6.2 5.5 7.4 6.8 L7.4 10 M8.6 10 L8.6 6.8 Q9.8 5.5 11 6.8 L11 10" fill="none" stroke="#3a8fc4" stroke-width="1"/></svg><div class="abs tr" style="left:53.5px;top:353.45px">Mates in Robot Platform As</div><div class="abs ar" style="left:23.5px;top:375.0px"></div><svg class="abs" style="left:35.5px;top:370.95px" width="15" height="14" viewBox="0 0 15 14"><path d="M1 2.5 L1 12.5 L14 12.5 L14 3.5 L7 3.5 L6 1.5 L2 1.5 Z" fill="#f4f4f4" stroke="#4a4a4a" stroke-width="1"/><rect x="2.5" y="5" width="10" height="6.5" fill="#fff" stroke="#777" stroke-width="0.6"/><circle cx="8" cy="8.3" r="2.6" fill="none" stroke="#2d7fb8" stroke-width="1.1"/><path d="M8 6.8 L8 8.4 L9.3 9" stroke="#2d7fb8" stroke-width="0.8" fill="none"/></svg><div class="abs tr" style="left:53.5px;top:369.95px">History</div><svg class="abs" style="left:35.5px;top:387.45px" width="15" height="14" viewBox="0 0 15 14"><path d="M1 2.5 L1 12.5 L14 12.5 L14 3.5 L7 3.5 L6 1.5 L2 1.5 Z" fill="#f4f4f4" stroke="#4a4a4a" stroke-width="1"/><rect x="2.5" y="5" width="10" height="6.5" fill="#fff" stroke="#777" stroke-width="0.6"/><circle cx="8" cy="8.3" r="2.7" fill="#eee" stroke="#666" stroke-width="0.9"/><path d="M8 8.3 L9.8 6.8" stroke="#d33" stroke-width="1"/></svg><div class="abs tr" style="left:53.5px;top:386.45px">Sensors</div><div class="abs ar" style="left:23.5px;top:408.00000000000006px"></div><svg class="abs" style="left:35.5px;top:403.95000000000005px" width="15" height="14" viewBox="0 0 15 14"><path d="M1 2.5 L1 12.5 L14 12.5 L14 3.5 L7 3.5 L6 1.5 L2 1.5 Z" fill="#f4f4f4" stroke="#4a4a4a" stroke-width="1"/><rect x="2.5" y="5" width="10" height="6.5" fill="#fff" stroke="#777" stroke-width="0.6"/><text x="4.6" y="11.3" font-family="Liberation Serif,serif" font-size="8.5" font-weight="bold" fill="#2d6fb0">A</text></svg><div class="abs tr" style="left:53.5px;top:402.95000000000005px">Annotations</div><svg class="abs" style="left:36.5px;top:420.45000000000005px" width="14" height="14" viewBox="0 0 14 14"><path d="M2.5 3.5 L10.5 1.5 L10.5 10.5 L2.5 12.5 Z" fill="#fafafa" stroke="#555" stroke-width="1"/><path d="M6.5 0.5 L6.5 13.5" stroke="#555" stroke-width="0.8" stroke-dasharray="2 1.2"/></svg><div class="abs tr" style="left:53.5px;top:419.45000000000005px">Front Plane</div><svg class="abs" style="left:36.5px;top:436.95000000000005px" width="14" height="14" viewBox="0 0 14 14"><path d="M2.5 3.5 L10.5 1.5 L10.5 10.5 L2.5 12.5 Z" fill="#fafafa" stroke="#555" stroke-width="1"/><path d="M6.5 0.5 L6.5 13.5" stroke="#555" stroke-width="0.8" stroke-dasharray="2 1.2"/></svg><div class="abs tr" style="left:53.5px;top:435.95000000000005px">Top Plane</div><svg class="abs" style="left:36.5px;top:453.45000000000005px" width="14" height="14" viewBox="0 0 14 14"><path d="M2.5 3.5 L10.5 1.5 L10.5 10.5 L2.5 12.5 Z" fill="#fafafa" stroke="#555" stroke-width="1"/><path d="M6.5 0.5 L6.5 13.5" stroke="#555" stroke-width="0.8" stroke-dasharray="2 1.2"/></svg><div class="abs tr" style="left:53.5px;top:452.45000000000005px">Right Plane</div><svg class="abs" style="left:35.5px;top:469.45000000000005px" width="15" height="15" viewBox="0 0 15 15"><path d="M3 1 L3 12 L14 12" fill="none" stroke="#111" stroke-width="1.2"/><path d="M3 0 L1.3 3 L4.7 3 Z M15 12 L12 10.3 L12 13.7 Z" fill="#111"/></svg><div class="abs tr" style="left:53.5px;top:468.95000000000005px">Origin</div><div class="abs ar" style="left:23.5px;top:490.50000000000006px"></div><svg class="abs" style="left:35.5px;top:486.45000000000005px" width="15" height="14" viewBox="0 0 15 14"><path d="M1.5 5.5 L4.5 3.5 L4.5 1.5 L8.5 0.8 L10.5 2.5 L10.5 5 L13.5 7.5 L13.5 11 L9 13.3 L1.5 9.5 Z" fill="#f2c21a" stroke="#8a6a08" stroke-width="1"/><path d="M1.5 5.5 L9 9 L13.5 7.5 M9 9 L9 13" fill="none" stroke="#8a6a08" stroke-width="0.9"/><path d="M4.5 3.5 L7 4.8 L10.5 3.5 M7 4.8 L7 7.5" fill="none" stroke="#8a6a08" stroke-width="0.8"/></svg><div class="abs tr" style="left:53.5px;top:485.45000000000005px">(f) Shock Absorber - part 1&lt;</div><div class="abs ar" style="left:23.5px;top:507.00000000000006px"></div><svg class="abs" style="left:35.5px;top:502.95000000000005px" width="15" height="14" viewBox="0 0 15 14"><path d="M1.5 5.5 L4.5 3.5 L4.5 1.5 L8.5 0.8 L10.5 2.5 L10.5 5 L13.5 7.5 L13.5 11 L9 13.3 L1.5 9.5 Z" fill="#f2c21a" stroke="#8a6a08" stroke-width="1"/><path d="M1.5 5.5 L9 9 L13.5 7.5 M9 9 L9 13" fill="none" stroke="#8a6a08" stroke-width="0.9"/><path d="M4.5 3.5 L7 4.8 L10.5 3.5 M7 4.8 L7 7.5" fill="none" stroke="#8a6a08" stroke-width="0.8"/></svg><div class="abs tr" style="left:53.5px;top:501.95000000000005px">(-) Shock Absorber - part 2</div><svg class="abs" style="left:35.5px;top:519.45px" width="15" height="14" viewBox="0 0 15 14"><path d="M1.5 5.5 L4.5 3.5 L4.5 1.5 L8.5 0.8 L10.5 2.5 L10.5 5 L13.5 7.5 L13.5 11 L9 13.3 L1.5 9.5 Z" fill="#dcdcdc" stroke="#b5b5b5" stroke-width="1"/><path d="M1.5 5.5 L9 9 L13.5 7.5 M9 9 L9 13" fill="none" stroke="#b5b5b5" stroke-width="0.9"/><path d="M4.5 3.5 L7 4.8 L10.5 3.5 M7 4.8 L7 7.5" fill="none" stroke="#b5b5b5" stroke-width="0.8"/></svg><div class="abs tr g" style="left:53.5px;top:518.45px">(f) [ Spring^Shock Absorbe</div><div class="abs ar" style="left:23.5px;top:540.0px"></div><svg class="abs" style="left:36.0px;top:535.95px" width="14" height="14" viewBox="0 0 14 14"><path d="M2 12 L2 4 Q3.7 0.8 5.5 4 L5.5 12 M8 12 L8 4 Q9.7 0.8 11.5 4 L11.5 12" fill="none" stroke="#4a9cc9" stroke-width="1.6"/><path d="M3.7 10 L3.7 4.8 M9.7 10 L9.7 4.8" stroke="#9dc8e0" stroke-width="1"/></svg><div class="abs tr" style="left:53.5px;top:534.95px">Mates</div><div class="abs ar" style="left:6.0px;top:556.5px"></div><svg class="abs" style="left:18.0px;top:552.45px" width="15" height="14" viewBox="0 0 15 14"><path d="M1.5 5.5 L4.5 3.5 L4.5 1.5 L8.5 0.8 L10.5 2.5 L10.5 5 L13.5 7.5 L13.5 11 L9 13.3 L1.5 9.5 Z" fill="#f2c21a" stroke="#8a6a08" stroke-width="1"/><path d="M1.5 5.5 L9 9 L13.5 7.5 M9 9 L9 13" fill="none" stroke="#8a6a08" stroke-width="0.9"/><path d="M4.5 3.5 L7 4.8 L10.5 3.5 M7 4.8 L7 7.5" fill="none" stroke="#8a6a08" stroke-width="0.8"/></svg><div class="abs tr" style="left:36.0px;top:551.45px">Bracket for Shock Absorber&lt;6&gt;</div><div class="abs ar" style="left:6.0px;top:573.0px"></div><svg class="abs" style="left:18.0px;top:568.95px" width="15" height="14" viewBox="0 0 15 14"><path d="M1.5 5.5 L4.5 3.5 L4.5 1.5 L8.5 0.8 L10.5 2.5 L10.5 5 L13.5 7.5 L13.5 11 L9 13.3 L1.5 9.5 Z" fill="#f2c21a" stroke="#8a6a08" stroke-width="1"/><path d="M1.5 5.5 L9 9 L13.5 7.5 M9 9 L9 13" fill="none" stroke="#8a6a08" stroke-width="0.9"/><path d="M4.5 3.5 L7 4.8 L10.5 3.5 M7 4.8 L7 7.5" fill="none" stroke="#8a6a08" stroke-width="0.8"/></svg><div class="abs tr" style="left:36.0px;top:567.95px">(-) Road wheel arm&lt;6&gt; (Defaul</div><div class="abs ad" style="left:4.5px;top:591.2px"></div><svg class="abs" style="left:18.0px;top:584.95px" width="16" height="15" viewBox="0 0 16 15"><path d="M1.5 10 L4 7 L4 5 L8 5 L8 7 L12 9 L12 13.5 L1.5 13.5 Z" fill="#f2c21a" stroke="#8a6a08" stroke-width="0.9"/><path d="M9.5 2.5 L12 0.8 L15 1.5 L15 4.5 L12.5 6 L9.5 5.2 Z" fill="#4aa0d8" stroke="#1d5f8f" stroke-width="0.8"/></svg><div class="abs tr" style="left:36.0px;top:584.45px">(-) Shock Absorber - Assembly&lt;</div><div class="abs ar" style="left:23.5px;top:606.0px"></div><svg class="abs" style="left:35.5px;top:601.95px" width="15" height="14" viewBox="0 0 15 14"><path d="M1 2.5 L1 12.5 L14 12.5 L14 3.5 L7 3.5 L6 1.5 L2 1.5 Z" fill="#f4f4f4" stroke="#4a4a4a" stroke-width="1"/><rect x="2.5" y="5" width="10" height="6.5" fill="#fff" stroke="#777" stroke-width="0.6"/><path d="M5 10 L5 6.8 Q6.2 5.5 7.4 6.8 L7.4 10 M8.6 10 L8.6 6.8 Q9.8 5.5 11 6.8 L11 10" fill="none" stroke="#3a8fc4" stroke-width="1"/></svg><div class="abs tr" style="left:53.5px;top:600.95px">Mates in Robot Platform As</div><div class="abs ar" style="left:23.5px;top:622.5px"></div><svg class="abs" style="left:35.5px;top:618.45px" width="15" height="14" viewBox="0 0 15 14"><path d="M1 2.5 L1 12.5 L14 12.5 L14 3.5 L7 3.5 L6 1.5 L2 1.5 Z" fill="#f4f4f4" stroke="#4a4a4a" stroke-width="1"/><rect x="2.5" y="5" width="10" height="6.5" fill="#fff" stroke="#777" stroke-width="0.6"/><circle cx="8" cy="8.3" r="2.6" fill="none" stroke="#2d7fb8" stroke-width="1.1"/><path d="M8 6.8 L8 8.4 L9.3 9" stroke="#2d7fb8" stroke-width="0.8" fill="none"/></svg><div class="abs tr" style="left:53.5px;top:617.45px">History</div><svg class="abs" style="left:35.5px;top:634.95px" width="15" height="14" viewBox="0 0 15 14"><path d="M1 2.5 L1 12.5 L14 12.5 L14 3.5 L7 3.5 L6 1.5 L2 1.5 Z" fill="#f4f4f4" stroke="#4a4a4a" stroke-width="1"/><rect x="2.5" y="5" width="10" height="6.5" fill="#fff" stroke="#777" stroke-width="0.6"/><circle cx="8" cy="8.3" r="2.7" fill="#eee" stroke="#666" stroke-width="0.9"/><path d="M8 8.3 L9.8 6.8" stroke="#d33" stroke-width="1"/></svg><div class="abs tr" style="left:53.5px;top:633.95px">Sensors</div><div class="abs ar" style="left:23.5px;top:655.5px"></div><svg class="abs" style="left:35.5px;top:651.45px" width="15" height="14" viewBox="0 0 15 14"><path d="M1 2.5 L1 12.5 L14 12.5 L14 3.5 L7 3.5 L6 1.5 L2 1.5 Z" fill="#f4f4f4" stroke="#4a4a4a" stroke-width="1"/><rect x="2.5" y="5" width="10" height="6.5" fill="#fff" stroke="#777" stroke-width="0.6"/><text x="4.6" y="11.3" font-family="Liberation Serif,serif" font-size="8.5" font-weight="bold" fill="#2d6fb0">A</text></svg><div class="abs tr" style="left:53.5px;top:650.45px">Annotations</div><svg class="abs" style="left:36.5px;top:667.95px" width="14" height="14" viewBox="0 0 14 14"><path d="M2.5 3.5 L10.5 1.5 L10.5 10.5 L2.5 12.5 Z" fill="#fafafa" stroke="#555" stroke-width="1"/><path d="M6.5 0.5 L6.5 13.5" stroke="#555" stroke-width="0.8" stroke-dasharray="2 1.2"/></svg><div class="abs tr" style="left:53.5px;top:666.95px">Front Plane</div><svg class="abs" style="left:36.5px;top:684.45px" width="14" height="14" viewBox="0 0 14 14"><path d="M2.5 3.5 L10.5 1.5 L10.5 10.5 L2.5 12.5 Z" fill="#fafafa" stroke="#555" stroke-width="1"/><path d="M6.5 0.5 L6.5 13.5" stroke="#555" stroke-width="0.8" stroke-dasharray="2 1.2"/></svg><div class="abs tr" style="left:53.5px;top:683.45px">Top Plane</div><svg class="abs" style="left:36.5px;top:700.95px" width="14" height="14" viewBox="0 0 14 14"><path d="M2.5 3.5 L10.5 1.5 L10.5 10.5 L2.5 12.5 Z" fill="#fafafa" stroke="#555" stroke-width="1"/><path d="M6.5 0.5 L6.5 13.5" stroke="#555" stroke-width="0.8" stroke-dasharray="2 1.2"/></svg><div class="abs tr" style="left:53.5px;top:699.95px">Right Plane</div><svg class="abs" style="left:35.5px;top:716.95px" width="15" height="15" viewBox="0 0 15 15"><path d="M3 1 L3 12 L14 12" fill="none" stroke="#111" stroke-width="1.2"/><path d="M3 0 L1.3 3 L4.7 3 Z M15 12 L12 10.3 L12 13.7 Z" fill="#111"/></svg><div class="abs tr" style="left:53.5px;top:716.45px">Origin</div><div class="abs ar" style="left:23.5px;top:738.0px"></div><svg class="abs" style="left:35.5px;top:733.95px" width="15" height="14" viewBox="0 0 15 14"><path d="M1.5 5.5 L4.5 3.5 L4.5 1.5 L8.5 0.8 L10.5 2.5 L10.5 5 L13.5 7.5 L13.5 11 L9 13.3 L1.5 9.5 Z" fill="#f2c21a" stroke="#8a6a08" stroke-width="1"/><path d="M1.5 5.5 L9 9 L13.5 7.5 M9 9 L9 13" fill="none" stroke="#8a6a08" stroke-width="0.9"/><path d="M4.5 3.5 L7 4.8 L10.5 3.5 M7 4.8 L7 7.5" fill="none" stroke="#8a6a08" stroke-width="0.8"/></svg><div class="abs tr" style="left:53.5px;top:732.95px">(f) Shock Absorber - part 1&lt;</div><div class="abs ar" style="left:23.5px;top:754.5px"></div><svg class="abs" style="left:35.5px;top:750.45px" width="15" height="14" viewBox="0 0 15 14"><path d="M1.5 5.5 L4.5 3.5 L4.5 1.5 L8.5 0.8 L10.5 2.5 L10.5 5 L13.5 7.5 L13.5 11 L9 13.3 L1.5 9.5 Z" fill="#f2c21a" stroke="#8a6a08" stroke-width="1"/><path d="M1.5 5.5 L9 9 L13.5 7.5 M9 9 L9 13" fill="none" stroke="#8a6a08" stroke-width="0.9"/><path d="M4.5 3.5 L7 4.8 L10.5 3.5 M7 4.8 L7 7.5" fill="none" stroke="#8a6a08" stroke-width="0.8"/></svg><div class="abs tr" style="left:53.5px;top:749.45px">(-) Shock Absorber - part 2</div><svg class="abs" style="left:35.5px;top:766.95px" width="15" height="14" viewBox="0 0 15 14"><path d="M1.5 5.5 L4.5 3.5 L4.5 1.5 L8.5 0.8 L10.5 2.5 L10.5 5 L13.5 7.5 L13.5 11 L9 13.3 L1.5 9.5 Z" fill="#dcdcdc" stroke="#b5b5b5" stroke-width="1"/><path d="M1.5 5.5 L9 9 L13.5 7.5 M9 9 L9 13" fill="none" stroke="#b5b5b5" stroke-width="0.9"/><path d="M4.5 3.5 L7 4.8 L10.5 3.5 M7 4.8 L7 7.5" fill="none" stroke="#b5b5b5" stroke-width="0.8"/></svg><div class="abs tr g" style="left:53.5px;top:765.95px">(f) [ Spring^Shock Absorbe</div><div class="abs ar" style="left:23.5px;top:787.5px"></div><svg class="abs" style="left:36.0px;top:783.45px" width="14" height="14" viewBox="0 0 14 14"><path d="M2 12 L2 4 Q3.7 0.8 5.5 4 L5.5 12 M8 12 L8 4 Q9.7 0.8 11.5 4 L11.5 12" fill="none" stroke="#4a9cc9" stroke-width="1.6"/><path d="M3.7 10 L3.7 4.8 M9.7 10 L9.7 4.8" stroke="#9dc8e0" stroke-width="1"/></svg><div class="abs tr" style="left:53.5px;top:782.45px">Mates</div><div class="abs ar" style="left:6.0px;top:804.0px"></div><svg class="abs" style="left:18.0px;top:799.95px" width="15" height="14" viewBox="0 0 15 14"><path d="M1.5 5.5 L4.5 3.5 L4.5 1.5 L8.5 0.8 L10.5 2.5 L10.5 5 L13.5 7.5 L13.5 11 L9 13.3 L1.5 9.5 Z" fill="#f2c21a" stroke="#8a6a08" stroke-width="1"/><path d="M1.5 5.5 L9 9 L13.5 7.5 M9 9 L9 13" fill="none" stroke="#8a6a08" stroke-width="0.9"/><path d="M4.5 3.5 L7 4.8 L10.5 3.5 M7 4.8 L7 7.5" fill="none" stroke="#8a6a08" stroke-width="0.8"/></svg><div class="abs tr" style="left:36.0px;top:798.95px">Bracket for Shock Absorber&lt;7&gt;</div><div class="abs ar" style="left:6.0px;top:820.5px"></div><svg class="abs" style="left:18.0px;top:815.95px" width="16" height="15" viewBox="0 0 16 15"><path d="M1.5 10 L4 7 L4 5 L8 5 L8 7 L12 9 L12 13.5 L1.5 13.5 Z" fill="#f2c21a" stroke="#8a6a08" stroke-width="0.9"/><path d="M9.5 2.5 L12 0.8 L15 1.5 L15 4.5 L12.5 6 L9.5 5.2 Z" fill="#4aa0d8" stroke="#1d5f8f" stroke-width="0.8"/></svg><div class="abs tr" style="left:36.0px;top:815.45px">Shock Absorber - Assembly&lt;8&gt;</div><div class="abs ar" style="left:6.0px;top:837.0px"></div><svg class="abs" style="left:18.0px;top:832.95px" width="15" height="14" viewBox="0 0 15 14"><path d="M1.5 5.5 L4.5 3.5 L4.5 1.5 L8.5 0.8 L10.5 2.5 L10.5 5 L13.5 7.5 L13.5 11 L9 13.3 L1.5 9.5 Z" fill="#f2c21a" stroke="#8a6a08" stroke-width="1"/><path d="M1.5 5.5 L9 9 L13.5 7.5 M9 9 L9 13" fill="none" stroke="#8a6a08" stroke-width="0.9"/><path d="M4.5 3.5 L7 4.8 L10.5 3.5 M7 4.8 L7 7.5" fill="none" stroke="#8a6a08" stroke-width="0.8"/></svg><div class="abs tr" style="left:36.0px;top:831.95px">Road wheel arm&lt;7&gt; (Default) &lt;</div><div class="abs ar" style="left:6.0px;top:853.5px"></div><svg class="abs" style="left:18.0px;top:849.45px" width="15" height="14" viewBox="0 0 15 14"><path d="M1.5 5.5 L4.5 3.5 L4.5 1.5 L8.5 0.8 L10.5 2.5 L10.5 5 L13.5 7.5 L13.5 11 L9 13.3 L1.5 9.5 Z" fill="#f2c21a" stroke="#8a6a08" stroke-width="1"/><path d="M1.5 5.5 L9 9 L13.5 7.5 M9 9 L9 13" fill="none" stroke="#8a6a08" stroke-width="0.9"/><path d="M4.5 3.5 L7 4.8 L10.5 3.5 M7 4.8 L7 7.5" fill="none" stroke="#8a6a08" stroke-width="0.8"/></svg><div class="abs tr" style="left:36.0px;top:848.45px">(-) Sprocket v2&lt;1&gt; (Defau</div><div class="abs ar" style="left:6.0px;top:870.0px"></div><svg class="abs" style="left:18.0px;top:865.95px" width="15" height="14" viewBox="0 0 15 14"><path d="M1.5 5.5 L4.5 3.5 L4.5 1.5 L8.5 0.8 L10.5 2.5 L10.5 5 L13.5 7.5 L13.5 11 L9 13.3 L1.5 9.5 Z" fill="#f2c21a" stroke="#8a6a08" stroke-width="1"/><path d="M1.5 5.5 L9 9 L13.5 7.5 M9 9 L9 13" fill="none" stroke="#8a6a08" stroke-width="0.9"/><path d="M4.5 3.5 L7 4.8 L10.5 3.5 M7 4.8 L7 7.5" fill="none" stroke="#8a6a08" stroke-width="0.8"/></svg><div class="abs tr" style="left:36.0px;top:864.95px">(-) Track v1&lt;1&gt; (Default) &lt;&lt;Def</div><div class="abs ar" style="left:6.0px;top:886.5px"></div><svg class="abs" style="left:18.0px;top:882.45px" width="15" height="14" viewBox="0 0 15 14"><path d="M1.5 5.5 L4.5 3.5 L4.5 1.5 L8.5 0.8 L10.5 2.5 L10.5 5 L13.5 7.5 L13.5 11 L9 13.3 L1.5 9.5 Z" fill="#f2c21a" stroke="#8a6a08" stroke-width="1"/><path d="M1.5 5.5 L9 9 L13.5 7.5 M9 9 L9 13" fill="none" stroke="#8a6a08" stroke-width="0.9"/><path d="M4.5 3.5 L7 4.8 L10.5 3.5 M7 4.8 L7 7.5" fill="none" stroke="#8a6a08" stroke-width="0.8"/></svg><div class="abs tr" style="left:36.0px;top:881.45px">(-) Track v3&lt;3&gt; (Default) &lt;&lt;Def</div><div class="abs ar" style="left:6.0px;top:903.0px"></div><svg class="abs" style="left:18.0px;top:898.95px" width="15" height="14" viewBox="0 0 15 14"><path d="M1.5 5.5 L4.5 3.5 L4.5 1.5 L8.5 0.8 L10.5 2.5 L10.5 5 L13.5 7.5 L13.5 11 L9 13.3 L1.5 9.5 Z" fill="#f2c21a" stroke="#8a6a08" stroke-width="1"/><path d="M1.5 5.5 L9 9 L13.5 7.5 M9 9 L9 13" fill="none" stroke="#8a6a08" stroke-width="0.9"/><path d="M4.5 3.5 L7 4.8 L10.5 3.5 M7 4.8 L7 7.5" fill="none" stroke="#8a6a08" stroke-width="0.8"/></svg><div class="abs tr" style="left:36.0px;top:897.95px">(-) Ball Bearing 8x22x5mm h1&lt;</div><div class="abs" style="left:160px;top:56px;width:12px;height:854px;background:#f0f0f0"></div><div class="abs" style="left:161.5px;top:89px;width:8.5px;height:114px;background:#c9c9c9"></div><svg class="abs" style="left:162px;top:59px" width="8" height="6" viewBox="0 0 8 6"><path d="M1 5 L4 1.5 L7 5" fill="none" stroke="#555" stroke-width="1.1"/></svg><svg class="abs" style="left:162px;top:897px" width="8" height="6" viewBox="0 0 8 6"><path d="M1 1 L4 4.5 L7 1" fill="none" stroke="#555" stroke-width="1.1"/></svg><div class="abs" style="left:0;top:908px;width:172px;height:11px;background:#f0f0f0"></div><div class="abs" style="left:12px;top:909.5px;width:48px;height:8px;background:#cdcdcd"></div><svg class="abs" style="left:2px;top:909px" width="6" height="9" viewBox="0 0 6 9"><path d="M5 1 L1.5 4.5 L5 8" fill="none" stroke="#555" stroke-width="1.1"/></svg><div class="abs" style="left:0;top:919px;width:172px;height:15px;background:#e9e9e9;border-top:1px solid #c8c8c8;box-sizing:border-box"></div><div class="abs" style="left:0;top:920px;width:50px;height:14px;background:#c9c9c9;border-top:1px solid #9f9f9f;box-sizing:border-box"></div><svg class="abs" style="left:2px;top:922px" width="46" height="10" viewBox="0 0 46 10" fill="#adadad"><path d="M3 1 L4.2 1 L4.2 9 L3 9 Z M9 1 L9 9 L4.8 5 Z M41.8 1 L43 1 L43 9 L41.8 9 Z M37 1 L37 9 L41.2 5 Z"/></svg><div class="abs" style="left:50px;top:919px;width:44px;height:15px;background:#f8f8f8;font-size:9.3px;font-weight:bold;line-height:14px;text-align:center;color:#111">Model</div><div class="abs" style="left:98px;top:919px;font-size:9.3px;line-height:14px;color:#333;white-space:nowrap">Motion Study 1</div></div><div class="abs" style="left:172px;top:542px;width:6px;height:27px;background:#f4f4f4"></div><div class="abs" style="left:173px;top:553.5px;width:3px;height:3px;border:1px solid #bdbdbd;border-radius:50%"></div><svg class="abs" style="left:922.7px;top:92px;opacity:0.82" width="14" height="14" viewBox="0 0 14 14"><circle cx="8.5" cy="5" r="4.2" fill="#d5dbe2" stroke="#8b97a6" stroke-width="0.8"/><path d="M8.5 2 L8.5 8 M5.5 5 L11.5 5" stroke="#3a3f49" stroke-width="1.6" stroke-dasharray="1.6 1.2"/><path d="M5.4 8 L1 12.6" stroke="#4c9bd4" stroke-width="1.8"/></svg><svg class="abs" style="left:943px;top:92px;opacity:0.82" width="14" height="14" viewBox="0 0 14 14"><rect x="5" y="0.8" width="8.4" height="8.4" fill="none" stroke="#a9b1bd" stroke-width="0.8" stroke-dasharray="1.5 1"/><circle cx="7" cy="6" r="3.9" fill="#c3cad3" stroke="#8b97a6" stroke-width="0.8"/><path d="M4.2 8.8 L0.8 12.6" stroke="#4c9bd4" stroke-width="1.8"/></svg><svg class="abs" style="left:962.5px;top:92px;opacity:0.82" width="14" height="14" viewBox="0 0 14 14"><path d="M2 10.5 L7 5.5 L10.5 2 L12.5 3.5 L9 8 L11 10 L6.5 12.5 Z" fill="#b9bec6" stroke="#8e949d" stroke-width="0.6"/><path d="M12.5 9.2 L8 9.2 L8 7.4 L4.6 10 L8 12.6 L8 10.8 L12.5 10.8 Z" fill="#4c9bd4"/></svg><svg class="abs" style="left:981px;top:92px;opacity:0.82" width="14" height="14" viewBox="0 0 14 14"><path d="M1 5 L4.5 3 L4.5 11 L1 12.5 Z" fill="#4c9bd4" stroke="#2a6a9c" stroke-width="0.6"/><path d="M4.5 4 Q8.5 0.5 12.5 3 L12.5 10.5 L4.5 11 Z" fill="#b7bdc6" stroke="#8e949d" stroke-width="0.6"/><path d="M8.5 4 L12.5 3 L12.5 10.5 L8.5 11.5 Z" fill="#4c9bd4" stroke="#2a6a9c" stroke-width="0.6"/></svg><svg class="abs" style="left:1000.8px;top:92px;opacity:0.82" width="14" height="14" viewBox="0 0 14 14"><rect x="0.8" y="0.8" width="12.4" height="12.4" rx="2" fill="none" stroke="#9aa3b0" stroke-width="0.8"/><rect x="2" y="4" width="7.4" height="7.4" fill="#5aa5d8" stroke="#2a6a9c" stroke-width="0.7"/><path d="M2 4 L4.6 1.8 L12 1.8 L9.4 4 M12 1.8 L12 9 L9.4 11.4" fill="#d9dde3" stroke="#8e949d" stroke-width="0.6"/></svg><svg class="abs" style="left:1031px;top:92px;opacity:0.82" width="14" height="14" viewBox="0 0 14 14"><path d="M2 3.6 L6.5 2 L11.5 3.6 L11.5 11 L6.5 12.8 L2 11 Z" fill="#7fbde6" stroke="#3a7fb0" stroke-width="0.7"/><path d="M6.5 5 L11.5 3.6 L11.5 11 L6.5 12.8 Z" fill="#dfe6ee"/><path d="M2 3.6 L6.5 5 L11.5 3.6 M6.5 5 L6.5 12.8" fill="none" stroke="#3a7fb0" stroke-width="0.6"/></svg><svg class="abs" style="left:1061.75px;top:92px;opacity:0.82" width="14" height="14" viewBox="0 0 14 14"><path d="M0.8 7 Q6.5 0.5 12.6 7 Q6.5 13 0.8 7 Z" fill="#e4e6ea" stroke="#8e949d" stroke-width="0.6"/><circle cx="6.7" cy="6.6" r="2.9" fill="#1d1e22"/><path d="M6.7 3.7 L6.7 9.5" stroke="#e4e6ea" stroke-width="0.7"/></svg><svg class="abs" style="left:1090.6px;top:92px;opacity:0.82" width="14" height="14" viewBox="0 0 14 14"><circle cx="6.5" cy="6" r="5.2" fill="#d33"/><path d="M6.5 6 L6.5 0.8 A5.2 5.2 0 0 0 1.3 6 Z" fill="#3b6fd0"/><path d="M6.5 6 L1.3 6 A5.2 5.2 0 0 0 6.5 11.2 Z" fill="#3cae3c"/><path d="M6.5 6 L6.5 11.2 A5.2 5.2 0 0 0 11.7 6 Z" fill="#e8b52a"/><circle cx="5.5" cy="4.5" r="1.6" fill="#fff" opacity="0.8"/><path d="M11.6 6 L12.9 7.3 L7.4 12.6 L5.4 13.2 L6 11.3 Z" fill="#e8b53a" stroke="#6b4a10" stroke-width="0.5"/></svg><svg class="abs" style="left:1110px;top:92px;opacity:0.82" width="14" height="14" viewBox="0 0 14 14"><circle cx="6.5" cy="6" r="5.2" fill="#d33"/><path d="M6.5 6 L6.5 0.8 A5.2 5.2 0 0 0 1.3 6 Z" fill="#3b6fd0"/><path d="M6.5 6 L1.3 6 A5.2 5.2 0 0 0 6.5 11.2 Z" fill="#3cae3c"/><path d="M6.5 6 L6.5 11.2 A5.2 5.2 0 0 0 11.7 6 Z" fill="#e8b52a"/><circle cx="5.5" cy="4.5" r="1.6" fill="#fff" opacity="0.8"/><path d="M1.5 9.5 L11.5 9.5 L13 13 L0 13 Z" fill="#111"/><path d="M3.5 9.5 L6 9.5 L5.6 13 L2.6 13 Z M8.2 9.5 L10.6 9.5 L11.6 13 L8.6 13 Z" fill="#eee"/></svg><svg class="abs" style="left:1140.6px;top:92px;opacity:0.82" width="14" height="14" viewBox="0 0 14 14"><rect x="0.8" y="1.8" width="11.6" height="7.6" fill="#c3c6cc" stroke="#a4a8b0" stroke-width="0.6"/><path d="M6.6 9.4 L6.6 11.6 M3.6 12 L9.6 12" stroke="#a4a8b0" stroke-width="1.2"/></svg><div class="abs dd" style="left:1022px;top:98px;border-top-color:#7f828d;border-left-width:2px;border-right-width:2px;border-top-width:2.5px"></div><div class="abs dd" style="left:1052.5px;top:98px;border-top-color:#7f828d;border-left-width:2px;border-right-width:2px;border-top-width:2.5px"></div><div class="abs dd" style="left:1082.5px;top:98px;border-top-color:#7f828d;border-left-width:2px;border-right-width:2px;border-top-width:2.5px"></div><div class="abs dd" style="left:1131.5px;top:98px;border-top-color:#7f828d;border-left-width:2px;border-right-width:2px;border-top-width:2.5px"></div><div class="abs dd" style="left:1162.5px;top:98px;border-top-color:#7f828d;border-left-width:2px;border-right-width:2px;border-top-width:2.5px"></div><svg class="abs" style="left:1820px;top:92px" width="96" height="14" viewBox="0 0 96 14" fill="none" stroke="#9a9ca3" stroke-width="1"><rect x="2" y="2.5" width="8" height="9"/><path d="M4 7 L7 5 L7 9 Z" fill="#9a9ca3" stroke="none"/><rect x="22" y="2.5" width="8" height="9"/><path d="M28 7 L25 5 L25 9 Z" fill="#9a9ca3" stroke="none"/><path d="M42 10.5 L49 10.5" stroke-width="1.3"/><rect x="60.5" y="5.5" width="7" height="5.5"/><path d="M63 5.5 L63 3 L70.5 3 L70.5 8.5 L67.5 8.5"/><path d="M81 3 L88 10.5 M88 3 L81 10.5" stroke-width="1.2"/></svg><div class="abs" style="left:1901px;top:126px;width:19px;height:127px;background:#d7d7d7;border:1px solid #b5b5b5;box-sizing:border-box"></div><div class="abs" style="left:1901px;top:126px;width:19px;height:17px;background:#fafafa"></div><svg class="abs" style="left:1902.5px;top:127.0px" width="16" height="16" viewBox="0 0 16 16"><circle cx="8" cy="8" r="7" fill="#1f5f93"/><circle cx="8" cy="8" r="4.5" fill="none" stroke="#9cc4e4" stroke-width="0.8"/><path d="M6.8 6 L10 8 L6.8 10 Z" fill="#cfe3f3"/></svg><svg class="abs" style="left:1902.5px;top:145.1px" width="16" height="16" viewBox="0 0 16 16"><path d="M3 4 L8 2 L13 4 L13 12 L8 14.5 L3 12 Z" fill="#e8e8e8" stroke="#555" stroke-width="0.9"/><path d="M5.5 3 L5.5 13 M8 2 L8 14.5 M10.5 3 L10.5 13.3" stroke="#555" stroke-width="0.8"/></svg><div class="abs" style="left:1901px;top:144.1px;width:19px;height:1px;background:#b5b5b5"></div><svg class="abs" style="left:1902.5px;top:163.2px" width="16" height="16" viewBox="0 0 16 16"><rect x="1.5" y="2.5" width="13" height="11" fill="#e8b52a" stroke="#7a5c10" stroke-width="0.9"/><path d="M4 4.5 L12 4.5 L9.5 8 L12 11.5 L4 11.5 L6.5 8 Z" fill="#fff3c4" stroke="#7a5c10" stroke-width="0.6"/></svg><div class="abs" style="left:1901px;top:162.2px;width:19px;height:1px;background:#b5b5b5"></div><svg class="abs" style="left:1902.5px;top:181.3px" width="16" height="16" viewBox="0 0 16 16"><circle cx="8" cy="8" r="6.5" fill="#e33"/><path d="M8 8 L8 1.5 A6.5 6.5 0 0 0 1.5 8 Z" fill="#3b8fd0"/><path d="M8 8 L1.5 8 A6.5 6.5 0 0 0 8 14.5 Z" fill="#3cb043"/><path d="M8 8 L8 14.5 A6.5 6.5 0 0 0 14.5 8 Z" fill="#f2c21a"/></svg><div class="abs" style="left:1901px;top:180.3px;width:19px;height:1px;background:#b5b5b5"></div><svg class="abs" style="left:1902.5px;top:199.4px" width="16" height="16" viewBox="0 0 16 16"><path d="M1.5 3 L1.5 13.5 L12 13.5 L15 7 L6 7 L4.5 3 Z" fill="#fafafa" stroke="#555" stroke-width="1"/></svg><div class="abs" style="left:1901px;top:198.4px;width:19px;height:1px;background:#b5b5b5"></div><svg class="abs" style="left:1902.5px;top:217.5px" width="16" height="16" viewBox="0 0 16 16"><rect x="1.5" y="2" width="13" height="12" fill="#fff" stroke="#2d6fa8" stroke-width="1.1"/><rect x="1.5" y="2" width="13" height="2.4" fill="#2d6fa8"/><path d="M3.5 7 L5.5 7 M7 7 L13 7 M3.5 9.5 L5.5 9.5 M7 9.5 L13 9.5 M3.5 12 L5.5 12 M7 12 L13 12" stroke="#444" stroke-width="1"/></svg><div class="abs" style="left:1901px;top:216.5px;width:19px;height:1px;background:#b5b5b5"></div><svg class="abs" style="left:1902.5px;top:235.60000000000002px" width="16" height="16" viewBox="0 0 16 16"><path d="M1.5 8 L8 2 L14.5 8" fill="none" stroke="#2f78b7" stroke-width="1.8"/><path d="M3.8 8 L3.8 14 L12.2 14 L12.2 8" fill="#fff" stroke="#555" stroke-width="1"/><rect x="6.7" y="10" width="2.6" height="4" fill="none" stroke="#555" stroke-width="0.8"/></svg><div class="abs" style="left:1901px;top:234.60000000000002px;width:19px;height:1px;background:#b5b5b5"></div><div class="abs" style="left:172px;top:1024px;width:1748px;height:1px;background:#9c9c9c"></div><div class="abs" style="left:172px;top:1025px;width:1748px;height:11px;background:#f6f6f6"></div><div id="status" class="abs"><span class="abs" style="left:1px;white-space:nowrap;font-size:8.3px">SOLIDWORKS Premium 2022 SP5.0</span><span class="abs" style="left:1601px;white-space:nowrap">Under Defined</span><span class="abs" style="left:1671px;white-space:nowrap">Editing Assembly</span><span class="abs" style="left:1840px">MMGS</span></div><svg class="abs" style="left:1757px;top:1038px" width="8" height="11" viewBox="0 0 8 11"><rect x="1.5" y="0.8" width="5" height="9.4" rx="2" fill="#333"/><circle cx="4" cy="3.5" r="1.4" fill="#e33"/><circle cx="4" cy="7.3" r="1.4" fill="#3b3"/></svg><div class="abs" style="left:1768px;top:1038px;width:1px;height:11px;background:#d5d5d5"></div><div class="abs dd" style="left:1884px;top:1042px;border-top:none;border-bottom:3px solid #444"></div><svg class="abs" style="left:1904px;top:1037px" width="14" height="12" viewBox="0 0 14 12"><path d="M1.5 4 L8 1.5 L12.5 4.5 L12 8.5 L6 10.5 L1.5 7.5 Z" fill="#ddd" stroke="#555" stroke-width="0.9"/></svg><div id="bottom" class="abs"></div><div id="url" class="abs">www.HowToMechatronics.com</div><svg class="abs" style="left:0;top:0;pointer-events:none" width="1920" height="1080" viewBox="0 0 1920 1080"><g opacity="0.78"><defs><linearGradient id="gWm" x1="0" y1="0" x2="0" y2="1"><stop offset="0" stop-color="#84c2e8"/><stop offset="0.5" stop-color="#4696cf"/><stop offset="1" stop-color="#2f80bd"/></linearGradient><linearGradient id="gWm2" x1="0" y1="0" x2="1" y2="1"><stop offset="0" stop-color="#9fd0ee"/><stop offset="1" stop-color="#4a94cc"/></linearGradient></defs><rect x="12.3" y="950.5" width="26" height="90.5" fill="url(#gWm2)"/><rect x="19" y="966" width="11" height="16" rx="3" fill="#e9dfb6"/><circle cx="24.5" cy="998" r="9" fill="#ece6cf"/><circle cx="24.5" cy="1022" r="7.5" fill="#b9b4ae" stroke="#6d7f93" stroke-width="2"/><path d="M17 1003 L20 1020 M32 1003 L29 1020" stroke="#6d7f93" stroke-width="1.2"/><path d="M37 950.5 L52 950.5 L67 975 L82 950.5 L90 950.5 L90 965 L70 998 L62 998 L37 958 Z" fill="#5b8fd8"/><rect x="90" y="950.5" width="27" height="96" fill="#7fbce6"/><g font-family="Liberation Mono,monospace" font-size="4.6" fill="#2d6da8"><text x="92" y="956" textLength="23" lengthAdjust="spacingAndGlyphs">10100101</text><text x="92" y="961.5" textLength="23" lengthAdjust="spacingAndGlyphs">01100010</text><text x="92" y="966.9" textLength="23" lengthAdjust="spacingAndGlyphs">11101101</text><text x="92" y="972.4" textLength="23" lengthAdjust="spacingAndGlyphs">00101101</text><text x="92" y="977.8" textLength="23" lengthAdjust="spacingAndGlyphs">10110101</text><text x="92" y="983.2" textLength="23" lengthAdjust="spacingAndGlyphs">11001111</text><text x="92" y="988.7" textLength="23" lengthAdjust="spacingAndGlyphs">00010011</text><text x="92" y="994.1" textLength="23" lengthAdjust="spacingAndGlyphs">10100101</text><text x="92" y="999.6" textLength="23" lengthAdjust="spacingAndGlyphs">10000001</text><text x="92" y="1005" textLength="23" lengthAdjust="spacingAndGlyphs">11111000</text><text x="92" y="1010.5" textLength="23" lengthAdjust="spacingAndGlyphs">01000011</text><text x="92" y="1016" textLength="23" lengthAdjust="spacingAndGlyphs">00001110</text><text x="92" y="1021.4" textLength="23" lengthAdjust="spacingAndGlyphs">10111001</text><text x="92" y="1026.8" textLength="23" lengthAdjust="spacingAndGlyphs">11101100</text><text x="92" y="1032.3" textLength="23" lengthAdjust="spacingAndGlyphs">10100101</text><text x="92" y="1037.8" textLength="23" lengthAdjust="spacingAndGlyphs">00100110</text><text x="92" y="1043.2" textLength="23" lengthAdjust="spacingAndGlyphs">10011010</text></g><text x="160.8" y="990.4" font-family="DejaVu Sans Condensed,DejaVu Sans,sans-serif" font-weight="bold" font-size="47" fill="url(#gWm)" stroke="url(#gWm)" stroke-width="2.6" stroke-linejoin="round" textLength="103.5" lengthAdjust="spacingAndGlyphs">How To</text><text x="120.5" y="1045.4" font-family="DejaVu Sans Condensed,DejaVu Sans,sans-serif" font-weight="bold" font-size="45" fill="url(#gWm)" stroke="url(#gWm)" stroke-width="2.6" stroke-linejoin="round" textLength="192.5" lengthAdjust="spacingAndGlyphs">ECHATRONICS</text></g><path d="M202 981 L202 962" stroke="#2db52d" stroke-width="2"/><path d="M202 957 L198.8 964 L205.2 964 Z" fill="#2db52d"/><path d="M202 981 L219 981" stroke="#e03030" stroke-width="2"/><path d="M224 981 L217 977.8 L217 984.2 Z" fill="#e03030"/><rect x="199.5" y="978.5" width="5" height="5" fill="#3a5fd0"/></svg></body></html>
